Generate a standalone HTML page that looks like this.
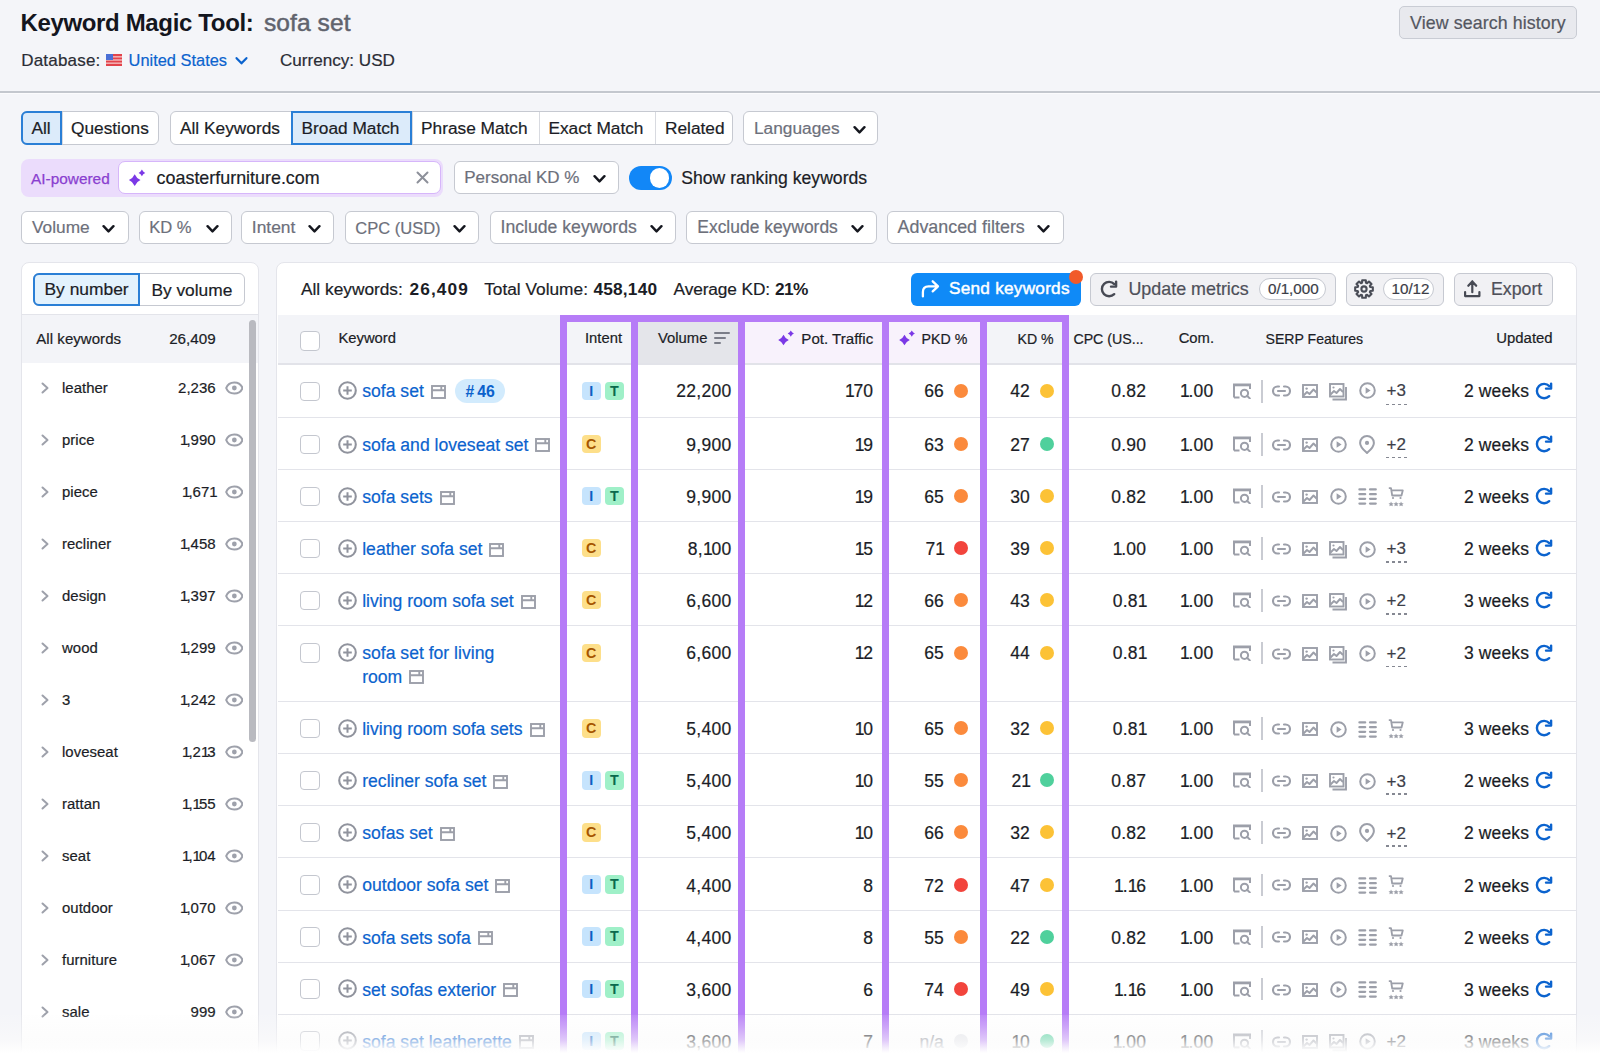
<!DOCTYPE html>
<html><head><meta charset="utf-8"><title>Keyword Magic Tool</title>
<style>
html,body{margin:0;padding:0;}
body{width:1600px;height:1059px;overflow:hidden;position:relative;background:#f4f5f9;font-family:"Liberation Sans",sans-serif;}
.t{position:absolute;white-space:nowrap;}
.r{position:absolute;display:block;}
</style></head><body>
<div class="t" style="top:11.47px;font-size:24px;line-height:24px;font-weight:700;color:#14161e;letter-spacing:-0.35px;left:20.5px;">Keyword Magic Tool:</div>
<div class="t" style="top:11.05px;font-size:24.5px;line-height:24.5px;font-weight:400;color:#60636d;letter-spacing:0.1px;left:264px;-webkit-text-stroke:0.5px #60636d;">sofa set</div>
<div class="t" style="top:52.30px;font-size:17px;line-height:17px;font-weight:400;color:#2a2c35;-webkit-text-stroke:0.2px currentColor;letter-spacing:0.2px;left:21.2px;">Database:</div>
<svg class="r" style="left:106px;top:54px;" width="16" height="12" viewBox="0 0 16 12"><rect width="16" height="12" fill="#e2434b"/><rect y="2" width="16" height="1.6" fill="#fff" opacity=".55"/><rect y="5.2" width="16" height="1.6" fill="#fff" opacity=".55"/><rect y="8.4" width="16" height="1.6" fill="#fff" opacity=".55"/><rect width="7" height="6" fill="#4a6fd6"/></svg>
<div class="t" style="top:52.01px;font-size:16.4px;line-height:16.4px;font-weight:400;color:#0b63ce;-webkit-text-stroke:0.2px currentColor;left:128.6px;">United States</div>
<svg class="r" style="left:235.3px;top:54.0px;" width="13" height="13" viewBox="0 0 13 13"><path d="M1.56 4.16 L6.50 9.36 L11.44 4.16" fill="none" stroke="#0b63ce" stroke-width="2.2" stroke-linecap="round" stroke-linejoin="round"/></svg>
<div class="t" style="top:52.22px;font-size:17.1px;line-height:17.1px;font-weight:400;color:#2a2c35;-webkit-text-stroke:0.2px currentColor;left:280px;">Currency: USD</div>
<div class="r" style="left:1399px;top:6px;width:177.5px;height:33px;background:#e8e9ee;border:1px solid #c9ccd4;border-radius:5px;box-sizing:border-box;"></div>
<div class="t" style="top:15.12px;font-size:17.8px;line-height:17.8px;font-weight:400;color:#545761;-webkit-text-stroke:0.2px currentColor;letter-spacing:0.1px;left:1410px;">View search history</div>
<div class="r" style="left:0px;top:91px;width:1600px;height:1.6px;background:#c3c7ce;"></div>
<div class="r" style="left:0px;top:92.6px;width:1600px;height:1px;background:#fbfbfd;"></div>
<div class="r" style="left:21px;top:111px;width:138px;height:34px;background:#fff;border:1px solid #c6c9d1;border-radius:6px;box-sizing:border-box;"></div>
<div class="r" style="left:62px;top:112px;width:1px;height:32px;background:#d8dae0;"></div>
<div class="r" style="left:21px;top:111px;width:41px;height:34px;background:#dcebfa;border:2px solid #2a7fd6;border-radius:6px 0 0 6px;box-sizing:border-box;"></div>
<div class="t" style="top:120.45px;font-size:17.3px;line-height:17.3px;font-weight:400;color:#1b1d26;-webkit-text-stroke:0.2px currentColor;left:31.5px;">All</div>
<div class="t" style="top:120.45px;font-size:17.3px;line-height:17.3px;font-weight:400;color:#1b1d26;-webkit-text-stroke:0.2px currentColor;left:71px;">Questions</div>
<div class="r" style="left:170px;top:111px;width:563.4px;height:34px;background:#fff;border:1px solid #c6c9d1;border-radius:6px;box-sizing:border-box;"></div>
<div class="r" style="left:290.5px;top:112px;width:1px;height:32px;background:#d8dae0;"></div>
<div class="r" style="left:411.5px;top:112px;width:1px;height:32px;background:#d8dae0;"></div>
<div class="r" style="left:538.5px;top:112px;width:1px;height:32px;background:#d8dae0;"></div>
<div class="r" style="left:654.7px;top:112px;width:1px;height:32px;background:#d8dae0;"></div>
<div class="r" style="left:290.5px;top:111px;width:121.0px;height:34px;background:#dcebfa;border:2px solid #2a7fd6;border-radius:0;box-sizing:border-box;"></div>
<div class="t" style="top:120.45px;font-size:17.3px;line-height:17.3px;font-weight:400;color:#1b1d26;-webkit-text-stroke:0.2px currentColor;left:180px;">All Keywords</div>
<div class="t" style="top:120.45px;font-size:17.3px;line-height:17.3px;font-weight:400;color:#1b1d26;-webkit-text-stroke:0.2px currentColor;left:301.5px;">Broad Match</div>
<div class="t" style="top:120.45px;font-size:17.3px;line-height:17.3px;font-weight:400;color:#1b1d26;-webkit-text-stroke:0.2px currentColor;left:421px;">Phrase Match</div>
<div class="t" style="top:120.45px;font-size:17.3px;line-height:17.3px;font-weight:400;color:#1b1d26;-webkit-text-stroke:0.2px currentColor;left:548.4px;">Exact Match</div>
<div class="t" style="top:120.45px;font-size:17.3px;line-height:17.3px;font-weight:400;color:#1b1d26;-webkit-text-stroke:0.2px currentColor;left:665px;">Related</div>
<div class="r" style="left:743px;top:111px;width:135px;height:34px;background:#fff;border:1px solid #c6c9d1;border-radius:6px;box-sizing:border-box;"></div>
<div class="t" style="top:119.65px;font-size:17.3px;line-height:17.3px;font-weight:400;color:#6d707b;-webkit-text-stroke:0.2px currentColor;left:754px;">Languages</div>
<svg class="r" style="left:852.8px;top:122.80000000000001px;" width="13" height="13" viewBox="0 0 13 13"><path d="M1.56 4.16 L6.50 9.36 L11.44 4.16" fill="none" stroke="#15171f" stroke-width="2.4" stroke-linecap="round" stroke-linejoin="round"/></svg>
<div class="r" style="left:21px;top:159px;width:422px;height:37.5px;background:#ebdcfc;border-radius:8px;"></div>
<div class="t" style="top:170.56px;font-size:15.4px;line-height:15.4px;font-weight:400;color:#8a3fd0;left:31px;-webkit-text-stroke:0.25px #8a3fd0;">AI-powered</div>
<div class="r" style="left:117.5px;top:161px;width:323.5px;height:33px;background:#fff;border:1.5px solid #d6b6fa;border-radius:7px;box-sizing:border-box;"></div>
<svg class="r" style="left:126px;top:168px;" width="22" height="20" viewBox="0 0 22 20"><path d="M8.7 6.3 Q10.44 10.36 14.5 12.1 Q10.44 13.84 8.7 17.9 Q6.959999999999999 13.84 2.8999999999999995 12.1 Q6.959999999999999 10.36 8.7 6.3Z" fill="#7b39e6"/><path d="M15.9 1.6000000000000005 Q16.89 3.9100000000000006 19.2 4.9 Q16.89 5.890000000000001 15.9 8.2 Q14.91 5.890000000000001 12.600000000000001 4.9 Q14.91 3.9100000000000006 15.9 1.6000000000000005Z" fill="#7b39e6"/></svg>
<div class="t" style="top:170.14px;font-size:17.9px;line-height:17.9px;font-weight:400;color:#1b1d26;-webkit-text-stroke:0.2px currentColor;left:156.6px;">coasterfurniture.com</div>
<svg class="r" style="left:416px;top:171px;" width="13" height="13" viewBox="0 0 13 13"><path d="M1.5 1.5 L11.5 11.5 M11.5 1.5 L1.5 11.5" stroke="#8d909a" stroke-width="2" stroke-linecap="round"/></svg>
<div class="r" style="left:453.5px;top:161px;width:165.5px;height:32.6px;background:#fff;border:1px solid #c6c9d1;border-radius:6px;box-sizing:border-box;"></div>
<div class="t" style="top:169.20px;font-size:17.0px;line-height:17.0px;font-weight:400;color:#6d707b;-webkit-text-stroke:0.2px currentColor;left:464.2px;">Personal KD %</div>
<svg class="r" style="left:592.8px;top:172.10000000000002px;" width="13" height="13" viewBox="0 0 13 13"><path d="M1.56 4.16 L6.50 9.36 L11.44 4.16" fill="none" stroke="#15171f" stroke-width="2.4" stroke-linecap="round" stroke-linejoin="round"/></svg>
<div class="r" style="left:629px;top:166px;width:42.5px;height:23.5px;background:#1287f7;border-radius:12px;"></div>
<div class="r" style="left:649.5px;top:168px;width:19.5px;height:19.5px;background:#fff;border-radius:50%;"></div>
<div class="t" style="top:169.59px;font-size:17.6px;line-height:17.6px;font-weight:400;color:#1b1d26;-webkit-text-stroke:0.2px currentColor;left:681.3px;">Show ranking keywords</div>
<div class="r" style="left:21px;top:211px;width:107.5px;height:32.6px;background:#fff;border:1px solid #c6c9d1;border-radius:6px;box-sizing:border-box;"></div>
<div class="t" style="top:218.95px;font-size:17.3px;line-height:17.3px;font-weight:400;color:#6d707b;-webkit-text-stroke:0.2px currentColor;left:32px;">Volume</div>
<svg class="r" style="left:102.3px;top:222.10000000000002px;" width="13" height="13" viewBox="0 0 13 13"><path d="M1.56 4.16 L6.50 9.36 L11.44 4.16" fill="none" stroke="#15171f" stroke-width="2.4" stroke-linecap="round" stroke-linejoin="round"/></svg>
<div class="r" style="left:138.5px;top:211px;width:93.1px;height:32.6px;background:#fff;border:1px solid #c6c9d1;border-radius:6px;box-sizing:border-box;"></div>
<div class="t" style="top:219.54px;font-size:16.6px;line-height:16.6px;font-weight:400;color:#6d707b;-webkit-text-stroke:0.2px currentColor;left:149.2px;">KD %</div>
<svg class="r" style="left:205.5px;top:222.10000000000002px;" width="13" height="13" viewBox="0 0 13 13"><path d="M1.56 4.16 L6.50 9.36 L11.44 4.16" fill="none" stroke="#15171f" stroke-width="2.4" stroke-linecap="round" stroke-linejoin="round"/></svg>
<div class="r" style="left:241.4px;top:211px;width:93.1px;height:32.6px;background:#fff;border:1px solid #c6c9d1;border-radius:6px;box-sizing:border-box;"></div>
<div class="t" style="top:218.86px;font-size:17.4px;line-height:17.4px;font-weight:400;color:#6d707b;-webkit-text-stroke:0.2px currentColor;left:251.8px;">Intent</div>
<svg class="r" style="left:308.3px;top:222.10000000000002px;" width="13" height="13" viewBox="0 0 13 13"><path d="M1.56 4.16 L6.50 9.36 L11.44 4.16" fill="none" stroke="#15171f" stroke-width="2.4" stroke-linecap="round" stroke-linejoin="round"/></svg>
<div class="r" style="left:344.6px;top:211px;width:134.79999999999995px;height:32.6px;background:#fff;border:1px solid #c6c9d1;border-radius:6px;box-sizing:border-box;"></div>
<div class="t" style="top:219.62px;font-size:16.5px;line-height:16.5px;font-weight:400;color:#6d707b;-webkit-text-stroke:0.2px currentColor;left:355.3px;">CPC (USD)</div>
<svg class="r" style="left:453.0px;top:222.10000000000002px;" width="13" height="13" viewBox="0 0 13 13"><path d="M1.56 4.16 L6.50 9.36 L11.44 4.16" fill="none" stroke="#15171f" stroke-width="2.4" stroke-linecap="round" stroke-linejoin="round"/></svg>
<div class="r" style="left:490px;top:211px;width:185.70000000000005px;height:32.6px;background:#fff;border:1px solid #c6c9d1;border-radius:6px;box-sizing:border-box;"></div>
<div class="t" style="top:218.65px;font-size:17.65px;line-height:17.65px;font-weight:400;color:#6d707b;-webkit-text-stroke:0.2px currentColor;left:500.5px;">Include keywords</div>
<svg class="r" style="left:649.8px;top:222.10000000000002px;" width="13" height="13" viewBox="0 0 13 13"><path d="M1.56 4.16 L6.50 9.36 L11.44 4.16" fill="none" stroke="#15171f" stroke-width="2.4" stroke-linecap="round" stroke-linejoin="round"/></svg>
<div class="r" style="left:686px;top:211px;width:190.70000000000005px;height:32.6px;background:#fff;border:1px solid #c6c9d1;border-radius:6px;box-sizing:border-box;"></div>
<div class="t" style="top:218.82px;font-size:17.45px;line-height:17.45px;font-weight:400;color:#6d707b;-webkit-text-stroke:0.2px currentColor;left:697.3px;">Exclude keywords</div>
<svg class="r" style="left:850.6px;top:222.10000000000002px;" width="13" height="13" viewBox="0 0 13 13"><path d="M1.56 4.16 L6.50 9.36 L11.44 4.16" fill="none" stroke="#15171f" stroke-width="2.4" stroke-linecap="round" stroke-linejoin="round"/></svg>
<div class="r" style="left:887px;top:211px;width:177px;height:32.6px;background:#fff;border:1px solid #c6c9d1;border-radius:6px;box-sizing:border-box;"></div>
<div class="t" style="top:219.14px;font-size:17.9px;line-height:17.9px;font-weight:400;color:#6d707b;-webkit-text-stroke:0.2px currentColor;left:897.5px;">Advanced filters</div>
<svg class="r" style="left:1037.3px;top:222.10000000000002px;" width="13" height="13" viewBox="0 0 13 13"><path d="M1.56 4.16 L6.50 9.36 L11.44 4.16" fill="none" stroke="#15171f" stroke-width="2.4" stroke-linecap="round" stroke-linejoin="round"/></svg>
<div class="r" style="left:21px;top:262.3px;width:237.8px;height:820px;background:#fff;border:1px solid #e4e5eb;border-radius:8px;box-sizing:border-box;"></div>
<div class="r" style="left:33.3px;top:272.5px;width:211.8px;height:33px;background:#fff;border:1px solid #c6c9d1;border-radius:6px;box-sizing:border-box;"></div>
<div class="r" style="left:33.3px;top:272.5px;width:106.5px;height:33px;background:#e3f2fd;border:2px solid #2a7fd6;border-radius:6px 0 0 6px;box-sizing:border-box;"></div>
<div class="t" style="top:281.46px;font-size:17.4px;line-height:17.4px;font-weight:400;color:#1b1d26;-webkit-text-stroke:0.2px currentColor;left:44.5px;">By number</div>
<div class="t" style="top:281.50px;font-size:17.35px;line-height:17.35px;font-weight:400;color:#1b1d26;-webkit-text-stroke:0.2px currentColor;left:151.4px;">By volume</div>
<div class="r" style="left:22px;top:314px;width:235.5px;height:1px;background:#e3e4ea;"></div>
<div class="r" style="left:22px;top:315px;width:235.5px;height:47.6px;background:#f3f4f8;"></div>
<div class="t" style="top:331.10px;font-size:15.0px;line-height:15.0px;font-weight:400;color:#1b1d26;-webkit-text-stroke:0.2px currentColor;letter-spacing:0.05px;left:36.3px;">All keywords</div>
<div class="t" style="top:330.93px;font-size:15.2px;line-height:15.2px;font-weight:400;color:#1b1d26;-webkit-text-stroke:0.2px currentColor;right:1384.4px;">26,409</div>
<svg class="r" style="left:40px;top:382px;" width="10" height="12" viewBox="0 0 10 12"><path d="M2.5 1.5 L7.5 6 L2.5 10.5" fill="none" stroke="#9ea1ab" stroke-width="2" stroke-linecap="round" stroke-linejoin="round"/></svg>
<div class="t" style="top:381.28px;font-size:14.9px;line-height:14.9px;font-weight:400;color:#1b1d26;-webkit-text-stroke:0.2px currentColor;letter-spacing:0.05px;left:62px;">leather</div>
<div class="t" style="top:380.00px;font-size:15.0px;line-height:15.0px;font-weight:400;color:#1b1d26;-webkit-text-stroke:0.2px currentColor;right:1384.4px;">2,236</div>
<svg class="r" style="left:224.8px;top:379.7px;" width="18.7" height="16" viewBox="0 0 18.7 16"><path d="M1.2 8 C4 0.6 14.7 0.6 17.5 8 C14.7 15.4 4 15.4 1.2 8Z" fill="none" stroke="#9ea1ab" stroke-width="2.1" stroke-linejoin="round"/><circle cx="9.35" cy="8" r="2.4" fill="#9ea1ab"/></svg>
<svg class="r" style="left:40px;top:434px;" width="10" height="12" viewBox="0 0 10 12"><path d="M2.5 1.5 L7.5 6 L2.5 10.5" fill="none" stroke="#9ea1ab" stroke-width="2" stroke-linecap="round" stroke-linejoin="round"/></svg>
<div class="t" style="top:433.28px;font-size:14.9px;line-height:14.9px;font-weight:400;color:#1b1d26;-webkit-text-stroke:0.2px currentColor;letter-spacing:0.05px;left:62px;">price</div>
<div class="t" style="top:432.00px;font-size:15.0px;line-height:15.0px;font-weight:400;color:#1b1d26;-webkit-text-stroke:0.2px currentColor;right:1384.4px;"><span style="letter-spacing:-2.0px">1</span>,990</div>
<svg class="r" style="left:224.8px;top:431.7px;" width="18.7" height="16" viewBox="0 0 18.7 16"><path d="M1.2 8 C4 0.6 14.7 0.6 17.5 8 C14.7 15.4 4 15.4 1.2 8Z" fill="none" stroke="#9ea1ab" stroke-width="2.1" stroke-linejoin="round"/><circle cx="9.35" cy="8" r="2.4" fill="#9ea1ab"/></svg>
<svg class="r" style="left:40px;top:486px;" width="10" height="12" viewBox="0 0 10 12"><path d="M2.5 1.5 L7.5 6 L2.5 10.5" fill="none" stroke="#9ea1ab" stroke-width="2" stroke-linecap="round" stroke-linejoin="round"/></svg>
<div class="t" style="top:485.28px;font-size:14.9px;line-height:14.9px;font-weight:400;color:#1b1d26;-webkit-text-stroke:0.2px currentColor;letter-spacing:0.05px;left:62px;">piece</div>
<div class="t" style="top:484.00px;font-size:15.0px;line-height:15.0px;font-weight:400;color:#1b1d26;-webkit-text-stroke:0.2px currentColor;right:1384.4px;"><span style="letter-spacing:-2.0px">1</span>,67<span style="letter-spacing:-2.0px">1</span></div>
<svg class="r" style="left:224.8px;top:483.7px;" width="18.7" height="16" viewBox="0 0 18.7 16"><path d="M1.2 8 C4 0.6 14.7 0.6 17.5 8 C14.7 15.4 4 15.4 1.2 8Z" fill="none" stroke="#9ea1ab" stroke-width="2.1" stroke-linejoin="round"/><circle cx="9.35" cy="8" r="2.4" fill="#9ea1ab"/></svg>
<svg class="r" style="left:40px;top:538px;" width="10" height="12" viewBox="0 0 10 12"><path d="M2.5 1.5 L7.5 6 L2.5 10.5" fill="none" stroke="#9ea1ab" stroke-width="2" stroke-linecap="round" stroke-linejoin="round"/></svg>
<div class="t" style="top:537.28px;font-size:14.9px;line-height:14.9px;font-weight:400;color:#1b1d26;-webkit-text-stroke:0.2px currentColor;letter-spacing:0.05px;left:62px;">recliner</div>
<div class="t" style="top:536.00px;font-size:15.0px;line-height:15.0px;font-weight:400;color:#1b1d26;-webkit-text-stroke:0.2px currentColor;right:1384.4px;"><span style="letter-spacing:-2.0px">1</span>,458</div>
<svg class="r" style="left:224.8px;top:535.7px;" width="18.7" height="16" viewBox="0 0 18.7 16"><path d="M1.2 8 C4 0.6 14.7 0.6 17.5 8 C14.7 15.4 4 15.4 1.2 8Z" fill="none" stroke="#9ea1ab" stroke-width="2.1" stroke-linejoin="round"/><circle cx="9.35" cy="8" r="2.4" fill="#9ea1ab"/></svg>
<svg class="r" style="left:40px;top:590px;" width="10" height="12" viewBox="0 0 10 12"><path d="M2.5 1.5 L7.5 6 L2.5 10.5" fill="none" stroke="#9ea1ab" stroke-width="2" stroke-linecap="round" stroke-linejoin="round"/></svg>
<div class="t" style="top:589.28px;font-size:14.9px;line-height:14.9px;font-weight:400;color:#1b1d26;-webkit-text-stroke:0.2px currentColor;letter-spacing:0.05px;left:62px;">design</div>
<div class="t" style="top:588.00px;font-size:15.0px;line-height:15.0px;font-weight:400;color:#1b1d26;-webkit-text-stroke:0.2px currentColor;right:1384.4px;"><span style="letter-spacing:-2.0px">1</span>,397</div>
<svg class="r" style="left:224.8px;top:587.7px;" width="18.7" height="16" viewBox="0 0 18.7 16"><path d="M1.2 8 C4 0.6 14.7 0.6 17.5 8 C14.7 15.4 4 15.4 1.2 8Z" fill="none" stroke="#9ea1ab" stroke-width="2.1" stroke-linejoin="round"/><circle cx="9.35" cy="8" r="2.4" fill="#9ea1ab"/></svg>
<svg class="r" style="left:40px;top:642px;" width="10" height="12" viewBox="0 0 10 12"><path d="M2.5 1.5 L7.5 6 L2.5 10.5" fill="none" stroke="#9ea1ab" stroke-width="2" stroke-linecap="round" stroke-linejoin="round"/></svg>
<div class="t" style="top:641.28px;font-size:14.9px;line-height:14.9px;font-weight:400;color:#1b1d26;-webkit-text-stroke:0.2px currentColor;letter-spacing:0.05px;left:62px;">wood</div>
<div class="t" style="top:640.00px;font-size:15.0px;line-height:15.0px;font-weight:400;color:#1b1d26;-webkit-text-stroke:0.2px currentColor;right:1384.4px;"><span style="letter-spacing:-2.0px">1</span>,299</div>
<svg class="r" style="left:224.8px;top:639.7px;" width="18.7" height="16" viewBox="0 0 18.7 16"><path d="M1.2 8 C4 0.6 14.7 0.6 17.5 8 C14.7 15.4 4 15.4 1.2 8Z" fill="none" stroke="#9ea1ab" stroke-width="2.1" stroke-linejoin="round"/><circle cx="9.35" cy="8" r="2.4" fill="#9ea1ab"/></svg>
<svg class="r" style="left:40px;top:694px;" width="10" height="12" viewBox="0 0 10 12"><path d="M2.5 1.5 L7.5 6 L2.5 10.5" fill="none" stroke="#9ea1ab" stroke-width="2" stroke-linecap="round" stroke-linejoin="round"/></svg>
<div class="t" style="top:693.28px;font-size:14.9px;line-height:14.9px;font-weight:400;color:#1b1d26;-webkit-text-stroke:0.2px currentColor;letter-spacing:0.05px;left:62px;">3</div>
<div class="t" style="top:692.00px;font-size:15.0px;line-height:15.0px;font-weight:400;color:#1b1d26;-webkit-text-stroke:0.2px currentColor;right:1384.4px;"><span style="letter-spacing:-2.0px">1</span>,242</div>
<svg class="r" style="left:224.8px;top:691.7px;" width="18.7" height="16" viewBox="0 0 18.7 16"><path d="M1.2 8 C4 0.6 14.7 0.6 17.5 8 C14.7 15.4 4 15.4 1.2 8Z" fill="none" stroke="#9ea1ab" stroke-width="2.1" stroke-linejoin="round"/><circle cx="9.35" cy="8" r="2.4" fill="#9ea1ab"/></svg>
<svg class="r" style="left:40px;top:746px;" width="10" height="12" viewBox="0 0 10 12"><path d="M2.5 1.5 L7.5 6 L2.5 10.5" fill="none" stroke="#9ea1ab" stroke-width="2" stroke-linecap="round" stroke-linejoin="round"/></svg>
<div class="t" style="top:745.28px;font-size:14.9px;line-height:14.9px;font-weight:400;color:#1b1d26;-webkit-text-stroke:0.2px currentColor;letter-spacing:0.05px;left:62px;">loveseat</div>
<div class="t" style="top:744.00px;font-size:15.0px;line-height:15.0px;font-weight:400;color:#1b1d26;-webkit-text-stroke:0.2px currentColor;right:1384.4px;"><span style="letter-spacing:-2.0px">1</span>,2<span style="letter-spacing:-2.0px">1</span>3</div>
<svg class="r" style="left:224.8px;top:743.7px;" width="18.7" height="16" viewBox="0 0 18.7 16"><path d="M1.2 8 C4 0.6 14.7 0.6 17.5 8 C14.7 15.4 4 15.4 1.2 8Z" fill="none" stroke="#9ea1ab" stroke-width="2.1" stroke-linejoin="round"/><circle cx="9.35" cy="8" r="2.4" fill="#9ea1ab"/></svg>
<svg class="r" style="left:40px;top:798px;" width="10" height="12" viewBox="0 0 10 12"><path d="M2.5 1.5 L7.5 6 L2.5 10.5" fill="none" stroke="#9ea1ab" stroke-width="2" stroke-linecap="round" stroke-linejoin="round"/></svg>
<div class="t" style="top:797.28px;font-size:14.9px;line-height:14.9px;font-weight:400;color:#1b1d26;-webkit-text-stroke:0.2px currentColor;letter-spacing:0.05px;left:62px;">rattan</div>
<div class="t" style="top:796.00px;font-size:15.0px;line-height:15.0px;font-weight:400;color:#1b1d26;-webkit-text-stroke:0.2px currentColor;right:1384.4px;"><span style="letter-spacing:-2.0px">1</span>,<span style="letter-spacing:-2.0px">1</span>55</div>
<svg class="r" style="left:224.8px;top:795.7px;" width="18.7" height="16" viewBox="0 0 18.7 16"><path d="M1.2 8 C4 0.6 14.7 0.6 17.5 8 C14.7 15.4 4 15.4 1.2 8Z" fill="none" stroke="#9ea1ab" stroke-width="2.1" stroke-linejoin="round"/><circle cx="9.35" cy="8" r="2.4" fill="#9ea1ab"/></svg>
<svg class="r" style="left:40px;top:850px;" width="10" height="12" viewBox="0 0 10 12"><path d="M2.5 1.5 L7.5 6 L2.5 10.5" fill="none" stroke="#9ea1ab" stroke-width="2" stroke-linecap="round" stroke-linejoin="round"/></svg>
<div class="t" style="top:849.28px;font-size:14.9px;line-height:14.9px;font-weight:400;color:#1b1d26;-webkit-text-stroke:0.2px currentColor;letter-spacing:0.05px;left:62px;">seat</div>
<div class="t" style="top:848.00px;font-size:15.0px;line-height:15.0px;font-weight:400;color:#1b1d26;-webkit-text-stroke:0.2px currentColor;right:1384.4px;"><span style="letter-spacing:-2.0px">1</span>,<span style="letter-spacing:-2.0px">1</span>04</div>
<svg class="r" style="left:224.8px;top:847.7px;" width="18.7" height="16" viewBox="0 0 18.7 16"><path d="M1.2 8 C4 0.6 14.7 0.6 17.5 8 C14.7 15.4 4 15.4 1.2 8Z" fill="none" stroke="#9ea1ab" stroke-width="2.1" stroke-linejoin="round"/><circle cx="9.35" cy="8" r="2.4" fill="#9ea1ab"/></svg>
<svg class="r" style="left:40px;top:902px;" width="10" height="12" viewBox="0 0 10 12"><path d="M2.5 1.5 L7.5 6 L2.5 10.5" fill="none" stroke="#9ea1ab" stroke-width="2" stroke-linecap="round" stroke-linejoin="round"/></svg>
<div class="t" style="top:901.28px;font-size:14.9px;line-height:14.9px;font-weight:400;color:#1b1d26;-webkit-text-stroke:0.2px currentColor;letter-spacing:0.05px;left:62px;">outdoor</div>
<div class="t" style="top:900.00px;font-size:15.0px;line-height:15.0px;font-weight:400;color:#1b1d26;-webkit-text-stroke:0.2px currentColor;right:1384.4px;"><span style="letter-spacing:-2.0px">1</span>,070</div>
<svg class="r" style="left:224.8px;top:899.7px;" width="18.7" height="16" viewBox="0 0 18.7 16"><path d="M1.2 8 C4 0.6 14.7 0.6 17.5 8 C14.7 15.4 4 15.4 1.2 8Z" fill="none" stroke="#9ea1ab" stroke-width="2.1" stroke-linejoin="round"/><circle cx="9.35" cy="8" r="2.4" fill="#9ea1ab"/></svg>
<svg class="r" style="left:40px;top:954px;" width="10" height="12" viewBox="0 0 10 12"><path d="M2.5 1.5 L7.5 6 L2.5 10.5" fill="none" stroke="#9ea1ab" stroke-width="2" stroke-linecap="round" stroke-linejoin="round"/></svg>
<div class="t" style="top:953.28px;font-size:14.9px;line-height:14.9px;font-weight:400;color:#1b1d26;-webkit-text-stroke:0.2px currentColor;letter-spacing:0.05px;left:62px;">furniture</div>
<div class="t" style="top:952.00px;font-size:15.0px;line-height:15.0px;font-weight:400;color:#1b1d26;-webkit-text-stroke:0.2px currentColor;right:1384.4px;"><span style="letter-spacing:-2.0px">1</span>,067</div>
<svg class="r" style="left:224.8px;top:951.7px;" width="18.7" height="16" viewBox="0 0 18.7 16"><path d="M1.2 8 C4 0.6 14.7 0.6 17.5 8 C14.7 15.4 4 15.4 1.2 8Z" fill="none" stroke="#9ea1ab" stroke-width="2.1" stroke-linejoin="round"/><circle cx="9.35" cy="8" r="2.4" fill="#9ea1ab"/></svg>
<svg class="r" style="left:40px;top:1006px;" width="10" height="12" viewBox="0 0 10 12"><path d="M2.5 1.5 L7.5 6 L2.5 10.5" fill="none" stroke="#9ea1ab" stroke-width="2" stroke-linecap="round" stroke-linejoin="round"/></svg>
<div class="t" style="top:1005.28px;font-size:14.9px;line-height:14.9px;font-weight:400;color:#1b1d26;-webkit-text-stroke:0.2px currentColor;letter-spacing:0.05px;left:62px;">sale</div>
<div class="t" style="top:1004.00px;font-size:15.0px;line-height:15.0px;font-weight:400;color:#1b1d26;-webkit-text-stroke:0.2px currentColor;right:1384.4px;">999</div>
<svg class="r" style="left:224.8px;top:1003.7px;" width="18.7" height="16" viewBox="0 0 18.7 16"><path d="M1.2 8 C4 0.6 14.7 0.6 17.5 8 C14.7 15.4 4 15.4 1.2 8Z" fill="none" stroke="#9ea1ab" stroke-width="2.1" stroke-linejoin="round"/><circle cx="9.35" cy="8" r="2.4" fill="#9ea1ab"/></svg>
<div class="r" style="left:249.3px;top:320px;width:6.7px;height:421.6px;background:#b9bac0;border-radius:4px;"></div>
<div class="r" style="left:275.8px;top:262.3px;width:1301.5px;height:820px;background:#fff;border:1px solid #e4e5eb;border-radius:8px;box-sizing:border-box;"></div>
<div class="t" style="top:281.05px;font-size:17.3px;line-height:17.3px;font-weight:400;color:#1b1d26;-webkit-text-stroke:0.2px currentColor;left:301px;">All keywords:</div>
<div class="t" style="top:281.25px;font-size:17.3px;line-height:17.3px;font-weight:700;color:#1b1d26;letter-spacing:1.1px;left:409.5px;">26,409</div>
<div class="t" style="top:281.05px;font-size:17.3px;line-height:17.3px;font-weight:400;color:#1b1d26;-webkit-text-stroke:0.2px currentColor;left:484.2px;">Total Volume:</div>
<div class="t" style="top:281.25px;font-size:17.3px;line-height:17.3px;font-weight:700;color:#1b1d26;letter-spacing:0.18px;left:593.5px;">458,140</div>
<div class="t" style="top:281.25px;font-size:17.3px;line-height:17.3px;font-weight:400;color:#1b1d26;-webkit-text-stroke:0.2px currentColor;letter-spacing:-0.12px;left:673.6px;">Average KD:</div>
<div class="t" style="top:281.25px;font-size:17.3px;line-height:17.3px;font-weight:700;color:#1b1d26;letter-spacing:-0.6px;left:775.0px;">21%</div>
<div class="r" style="left:911px;top:272.5px;width:169.5px;height:33px;background:#0f8af7;border-radius:6px;"></div>
<svg class="r" style="left:915px;top:276px;" width="26" height="24" viewBox="0 0 26 24"><path d="M7.9 20.4 V16 Q7.9 10.3 13.5 10.3 H23 M17.7 5.3 L23 10.3 L17.7 15.4" fill="none" stroke="#fff" stroke-width="2.3" stroke-linecap="round" stroke-linejoin="round"/></svg>
<div class="t" style="top:280.33px;font-size:17.2px;line-height:17.2px;font-weight:400;color:#fff;letter-spacing:0.25px;left:949.0px;-webkit-text-stroke:0.45px #fff;">Send keywords</div>
<div class="r" style="left:1069px;top:270px;width:14px;height:14px;background:#f15a2a;border-radius:50%;"></div>
<div class="r" style="left:1090px;top:272.5px;width:245.5999999999999px;height:33px;background:#f1f1f4;border:1px solid #c6c9d1;border-radius:6px;box-sizing:border-box;"></div>
<svg class="r" style="left:1099.5px;top:279.8px;" width="18" height="18" viewBox="0 0 18 18"><path d="M14.2 14.2 A7.2 7.2 0 1 1 14.3 4.1" fill="none" stroke="#474a54" stroke-width="2.4" stroke-linecap="round"/><path d="M16.1 1.6 V6.6 H11" fill="none" stroke="#474a54" stroke-width="2.4" stroke-linejoin="round" stroke-linecap="round"/></svg>
<div class="t" style="top:281.04px;font-size:17.9px;line-height:17.9px;font-weight:400;color:#4e5059;-webkit-text-stroke:0.2px currentColor;left:1128.4px;">Update metrics</div>
<div class="r" style="left:1259px;top:278.2px;width:67px;height:22.3px;background:#fff;border:1px solid #c6c9d1;border-radius:12px;box-sizing:border-box;"></div>
<div class="t" style="top:281.43px;font-size:15.2px;line-height:15.2px;font-weight:400;color:#3b3d47;-webkit-text-stroke:0.2px currentColor;left:1268px;">0/1,000</div>
<div class="r" style="left:1345.8px;top:272.5px;width:97.79999999999995px;height:33px;background:#f1f1f4;border:1px solid #c6c9d1;border-radius:6px;box-sizing:border-box;"></div>
<svg class="r" style="left:1349.4px;top:275.7px;" width="30" height="26" viewBox="0 0 30 26"><g fill="none" stroke="#4a4d57" stroke-width="2.1" stroke-linejoin="round"><path d="M13.05 6.69 L13.21 4.18 L16.79 4.18 L16.95 6.69 L18.08 7.16 L19.97 5.50 L22.50 8.03 L20.84 9.92 L21.31 11.05 L23.82 11.21 L23.82 14.79 L21.31 14.95 L20.84 16.08 L22.50 17.97 L19.97 20.50 L18.08 18.84 L16.95 19.31 L16.79 21.82 L13.21 21.82 L13.05 19.31 L11.92 18.84 L10.03 20.50 L7.50 17.97 L9.16 16.08 L8.69 14.95 L6.18 14.79 L6.18 11.21 L8.69 11.05 L9.16 9.92 L7.50 8.03 L10.03 5.50 L11.92 7.16Z"/><circle cx="15" cy="13" r="2.6"/></g></svg>
<div class="r" style="left:1383.4px;top:278.2px;width:50.59999999999991px;height:22.3px;background:#fff;border:1px solid #c6c9d1;border-radius:12px;box-sizing:border-box;"></div>
<div class="t" style="top:281.43px;font-size:15.2px;line-height:15.2px;font-weight:400;color:#3b3d47;-webkit-text-stroke:0.2px currentColor;left:1391.5px;">10/12</div>
<div class="r" style="left:1453.8px;top:272.5px;width:99.0px;height:33px;background:#f1f1f4;border:1px solid #c6c9d1;border-radius:6px;box-sizing:border-box;"></div>
<svg class="r" style="left:1458px;top:276px;" width="30" height="26" viewBox="0 0 30 26"><path d="M7.1 16 V20.1 H21.4 V16 M14.3 16.2 V5.4 M10.3 9.8 L14.3 5.4 L18.2 9.8" fill="none" stroke="#474a54" stroke-width="2.2" stroke-linecap="round" stroke-linejoin="round"/></svg>
<div class="t" style="top:281.17px;font-size:17.75px;line-height:17.75px;font-weight:400;color:#4e5059;-webkit-text-stroke:0.2px currentColor;left:1491px;">Export</div>
<div class="r" style="left:277.5px;top:315px;width:1298.5px;height:48.5px;background:#f3f4f8;"></div>
<div class="r" style="left:277.5px;top:363.4px;width:1298.5px;height:1.3px;background:#e2e3e9;"></div>
<div class="r" style="left:638px;top:315px;width:100px;height:48px;background:#e4e5ea;"></div>
<div class="r" style="left:745px;top:315px;width:137px;height:48px;background:#f8f2fc;"></div>
<div class="r" style="left:889px;top:315px;width:91px;height:48px;background:#f8f2fc;"></div>
<div class="r" style="left:300px;top:331px;width:19.5px;height:19.5px;background:#fff;border:1.3px solid #c4c7cf;border-radius:4px;box-sizing:border-box;"></div>
<div class="t" style="top:331.26px;font-size:14.8px;line-height:14.8px;font-weight:400;color:#1b1d26;-webkit-text-stroke:0.2px currentColor;left:338.4px;">Keyword</div>
<div class="t" style="top:331.26px;font-size:14.8px;line-height:14.8px;font-weight:400;color:#1b1d26;-webkit-text-stroke:0.2px currentColor;right:978px;">Intent</div>
<div class="t" style="top:331.26px;font-size:14.8px;line-height:14.8px;font-weight:400;color:#1b1d26;-webkit-text-stroke:0.2px currentColor;right:892.6px;">Volume</div>
<svg class="r" style="left:714px;top:331px;" width="16" height="14" viewBox="0 0 16 14"><path d="M1 2 H15 M1 7 H11 M1 12 H6" stroke="#7a7d88" stroke-width="2" stroke-linecap="round"/></svg>
<svg class="r" style="left:777px;top:329px;" width="19" height="18" viewBox="0 0 19 18"><path d="M6.5 5.7 Q8.09 9.41 11.8 11 Q8.09 12.59 6.5 16.3 Q4.91 12.59 1.2000000000000002 11 Q4.91 9.41 6.5 5.7Z" fill="#7b39e6"/><path d="M13.8 1.4999999999999996 Q14.73 3.67 16.900000000000002 4.6 Q14.73 5.529999999999999 13.8 7.699999999999999 Q12.870000000000001 5.529999999999999 10.700000000000001 4.6 Q12.870000000000001 3.67 13.8 1.4999999999999996Z" fill="#7b39e6"/></svg>
<div class="t" style="top:331.01px;font-size:15.1px;line-height:15.1px;font-weight:400;color:#1b1d26;-webkit-text-stroke:0.2px currentColor;right:726.8px;">Pot. Traffic</div>
<svg class="r" style="left:897.5px;top:329px;" width="19" height="18" viewBox="0 0 19 18"><path d="M6.5 5.7 Q8.09 9.41 11.8 11 Q8.09 12.59 6.5 16.3 Q4.91 12.59 1.2000000000000002 11 Q4.91 9.41 6.5 5.7Z" fill="#7b39e6"/><path d="M13.8 1.4999999999999996 Q14.73 3.67 16.900000000000002 4.6 Q14.73 5.529999999999999 13.8 7.699999999999999 Q12.870000000000001 5.529999999999999 10.700000000000001 4.6 Q12.870000000000001 3.67 13.8 1.4999999999999996Z" fill="#7b39e6"/></svg>
<div class="t" style="top:331.77px;font-size:14.2px;line-height:14.2px;font-weight:400;color:#1b1d26;-webkit-text-stroke:0.2px currentColor;left:921.6px;">PKD %</div>
<div class="t" style="top:331.86px;font-size:14.1px;line-height:14.1px;font-weight:400;color:#1b1d26;-webkit-text-stroke:0.2px currentColor;right:546.4000000000001px;">KD %</div>
<div class="t" style="top:331.77px;font-size:14.2px;line-height:14.2px;font-weight:400;color:#1b1d26;-webkit-text-stroke:0.2px currentColor;left:1073.4px;">CPC (US...</div>
<div class="t" style="top:331.26px;font-size:14.8px;line-height:14.8px;font-weight:400;color:#1b1d26;-webkit-text-stroke:0.2px currentColor;right:386px;">Com.</div>
<div class="t" style="top:331.86px;font-size:14.1px;line-height:14.1px;font-weight:400;color:#1b1d26;-webkit-text-stroke:0.2px currentColor;left:1265.5px;">SERP Features</div>
<div class="t" style="top:331.18px;font-size:14.9px;line-height:14.9px;font-weight:400;color:#1b1d26;-webkit-text-stroke:0.2px currentColor;right:47.40000000000009px;">Updated</div>
<div class="r" style="left:277.5px;top:417px;width:1298.5px;height:1px;background:#e3e4ea;"></div>
<div class="r" style="left:300px;top:381.55px;width:19.5px;height:19.5px;background:#fff;border:1.3px solid #c4c7cf;border-radius:4px;box-sizing:border-box;"></div>
<svg class="r" style="left:338.0px;top:380.75px;" width="19" height="19" viewBox="0 0 19 19"><circle cx="9.5" cy="9.5" r="8.3" fill="none" stroke="#90939d" stroke-width="2.1"/><path d="M9.5 5.2 V13.8 M5.2 9.5 H13.8" stroke="#90939d" stroke-width="2"/></svg>
<div class="t" style="top:383.14px;font-size:17.6px;line-height:17.6px;font-weight:400;color:#0b63ce;-webkit-text-stroke:0.2px currentColor;left:362.2px;">sofa set<svg style="display:inline-block;vertical-align:-1.5px;margin-left:7px" width="15" height="14" viewBox="0 0 15 14"><g fill="none" stroke="#9c9fa9" stroke-width="1.9"><rect x="1" y="1" width="13" height="12"/><path d="M1 5.2 H14 M10.3 1 V5.2"/></g></svg></div>
<div class="r" style="left:454.5px;top:379.3px;width:50.7px;height:23.5px;background:#d2ebfd;border-radius:12px;"></div>
<div class="t" style="top:384.07px;font-size:15.8px;line-height:15.8px;font-weight:700;color:#0b62cc;letter-spacing:0.2px;left:465.4px;">#&#8239;46</div>
<div class="r" style="left:582px;top:381.8px;width:18.5px;height:18.5px;background:#c6e4fd;border-radius:4px;"></div>
<div class="t" style="left:582px;width:18.5px;top:381.8px;height:18.5px;line-height:19.5px;text-align:center;font-size:14.3px;font-weight:700;color:#0d5fc4;">I</div>
<div class="r" style="left:605.2px;top:381.8px;width:18.5px;height:18.5px;background:#9ff0c8;border-radius:4px;"></div>
<div class="t" style="left:605.2px;width:18.5px;top:381.8px;height:18.5px;line-height:19.5px;text-align:center;font-size:14.3px;font-weight:700;color:#0a6a4c;">T</div>
<div class="t" style="top:383.23px;font-size:17.5px;line-height:17.5px;font-weight:400;color:#1b1d26;-webkit-text-stroke:0.2px currentColor;letter-spacing:0.3px;right:868.8px;margin-right:-0.3px;">22,200</div>
<div class="t" style="top:383.23px;font-size:17.5px;line-height:17.5px;font-weight:400;color:#1b1d26;-webkit-text-stroke:0.2px currentColor;right:727px;"><span style="letter-spacing:-1.2px">1</span>70</div>
<div class="t" style="top:383.23px;font-size:17.5px;line-height:17.5px;font-weight:400;color:#1b1d26;-webkit-text-stroke:0.2px currentColor;right:656.2px;">66</div>
<div class="r" style="left:954px;top:384.05px;width:14px;height:14px;background:#fb8a3c;border-radius:50%;"></div>
<div class="t" style="top:383.23px;font-size:17.5px;line-height:17.5px;font-weight:400;color:#1b1d26;-webkit-text-stroke:0.2px currentColor;right:570.3px;">42</div>
<div class="r" style="left:1040.3px;top:384.05px;width:14px;height:14px;background:#fcc236;border-radius:50%;"></div>
<div class="t" style="top:383.23px;font-size:17.5px;line-height:17.5px;font-weight:400;color:#1b1d26;-webkit-text-stroke:0.2px currentColor;letter-spacing:0.2px;right:454px;margin-right:-0.2px;">0.82</div>
<div class="t" style="top:383.23px;font-size:17.5px;line-height:17.5px;font-weight:400;color:#1b1d26;-webkit-text-stroke:0.2px currentColor;letter-spacing:0.2px;right:386.79999999999995px;margin-right:-0.2px;"><span style="letter-spacing:-1.2px">1</span>.00</div>
<svg class="r" style="left:1233px;top:383.05px;" width="18" height="16" viewBox="0 0 18 16"><g fill="none" stroke="#9c9fa9" stroke-width="2"><path d="M1 14.5 V2 H17 V6" /><path d="M1 14.5 H6.5"/><circle cx="11.5" cy="10.3" r="3.6"/><path d="M14 12.8 L16.8 15.4" stroke-linecap="round"/></g><rect x="0" y="0.5" width="18" height="2.8" fill="#9c9fa9"/></svg>
<div class="r" style="left:1261.3px;top:380.05px;width:1.3px;height:22.5px;background:#c9cbd2;"></div>
<svg class="r" style="left:1272.2px;top:384.65000000000003px;" width="19" height="12" viewBox="0 0 19 12"><g fill="none" stroke="#9c9fa9" stroke-width="2.1" stroke-linecap="round"><path d="M7 1.5 H5.5 A4.5 4.5 0 0 0 5.5 10.5 H7"/><path d="M12 1.5 H13.5 A4.5 4.5 0 0 1 13.5 10.5 H12"/><path d="M6 6 H13"/></g></svg>
<svg class="r" style="left:1302.2px;top:383.65000000000003px;" width="16" height="14" viewBox="0 0 16 14"><g fill="none" stroke="#9c9fa9" stroke-width="1.9"><rect x="1" y="1" width="14" height="12"/><path d="M1.5 11.5 L5 8 L7.5 10 L11.5 5.5 L14.5 8.5" stroke-linejoin="round"/></g><circle cx="4.6" cy="4.6" r="1.2" fill="#9c9fa9"/></svg>
<svg class="r" style="left:1329.3999999999999px;top:382.65000000000003px;" width="19" height="19" viewBox="0 0 19 19"><g fill="none" stroke="#9c9fa9" stroke-width="1.9"><rect x="1" y="1" width="13.5" height="12.5"/><path d="M1.5 11.5 L5 8 L7.5 10 L11 6 L14 9" stroke-linejoin="round"/><path d="M3.5 16.5 H17 V4"/></g><circle cx="4.5" cy="4.5" r="1.1" fill="#9c9fa9"/></svg>
<svg class="r" style="left:1358.5px;top:382.15000000000003px;" width="17" height="17" viewBox="0 0 17 17"><circle cx="8.5" cy="8.5" r="7.3" fill="none" stroke="#9c9fa9" stroke-width="2"/><path d="M6.6 5.2 L11.6 8.5 L6.6 11.8Z" fill="#9c9fa9"/></svg>
<div class="t" style="top:382.25px;font-size:17.0px;line-height:17.0px;font-weight:400;color:#3d4049;-webkit-text-stroke:0.2px currentColor;left:1386.6px;">+3</div>
<div class="r" style="left:1386.1px;top:403.85px;width:21px;height:1.5px;background:repeating-linear-gradient(90deg,#858892 0 2.6px,transparent 2.6px 6px);"></div>
<div class="t" style="top:383.23px;font-size:17.5px;line-height:17.5px;font-weight:400;color:#1b1d26;-webkit-text-stroke:0.2px currentColor;letter-spacing:0.15px;right:71px;margin-right:-0.15px;">2 weeks</div>
<svg class="r" style="left:1534.5px;top:382.05px;" width="18" height="18" viewBox="0 0 18 18"><path d="M14.2 14.2 A7.2 7.2 0 1 1 14.3 4.1" fill="none" stroke="#0b63ce" stroke-width="2.4" stroke-linecap="round"/><path d="M16.1 1.6 V6.6 H11" fill="none" stroke="#0b63ce" stroke-width="2.4" stroke-linejoin="round" stroke-linecap="round"/></svg>
<div class="r" style="left:277.5px;top:469px;width:1298.5px;height:1px;background:#e3e4ea;"></div>
<div class="r" style="left:300px;top:434.55px;width:19.5px;height:19.5px;background:#fff;border:1.3px solid #c4c7cf;border-radius:4px;box-sizing:border-box;"></div>
<svg class="r" style="left:338.0px;top:434.55px;" width="19" height="19" viewBox="0 0 19 19"><circle cx="9.5" cy="9.5" r="8.3" fill="none" stroke="#90939d" stroke-width="2.1"/><path d="M9.5 5.2 V13.8 M5.2 9.5 H13.8" stroke="#90939d" stroke-width="2"/></svg>
<div class="t" style="top:436.94px;font-size:17.6px;line-height:17.6px;font-weight:400;color:#0b63ce;-webkit-text-stroke:0.2px currentColor;left:362.2px;">sofa and loveseat set<svg style="display:inline-block;vertical-align:-1.5px;margin-left:7px" width="15" height="14" viewBox="0 0 15 14"><g fill="none" stroke="#9c9fa9" stroke-width="1.9"><rect x="1" y="1" width="13" height="12"/><path d="M1 5.2 H14 M10.3 1 V5.2"/></g></svg></div>
<div class="r" style="left:582px;top:434.8px;width:18.5px;height:18.5px;background:#fddf8a;border-radius:4px;"></div>
<div class="t" style="left:582px;width:18.5px;top:434.8px;height:18.5px;line-height:19.5px;text-align:center;font-size:14.3px;font-weight:700;color:#a65500;">C</div>
<div class="t" style="top:437.03px;font-size:17.5px;line-height:17.5px;font-weight:400;color:#1b1d26;-webkit-text-stroke:0.2px currentColor;letter-spacing:0.3px;right:868.8px;margin-right:-0.3px;">9,900</div>
<div class="t" style="top:437.03px;font-size:17.5px;line-height:17.5px;font-weight:400;color:#1b1d26;-webkit-text-stroke:0.2px currentColor;right:727px;"><span style="letter-spacing:-1.2px">1</span>9</div>
<div class="t" style="top:437.03px;font-size:17.5px;line-height:17.5px;font-weight:400;color:#1b1d26;-webkit-text-stroke:0.2px currentColor;right:656.2px;">63</div>
<div class="r" style="left:954px;top:437.05px;width:14px;height:14px;background:#fb8a3c;border-radius:50%;"></div>
<div class="t" style="top:437.03px;font-size:17.5px;line-height:17.5px;font-weight:400;color:#1b1d26;-webkit-text-stroke:0.2px currentColor;right:570.3px;">27</div>
<div class="r" style="left:1040.3px;top:437.05px;width:14px;height:14px;background:#4fd09c;border-radius:50%;"></div>
<div class="t" style="top:437.03px;font-size:17.5px;line-height:17.5px;font-weight:400;color:#1b1d26;-webkit-text-stroke:0.2px currentColor;letter-spacing:0.2px;right:454px;margin-right:-0.2px;">0.90</div>
<div class="t" style="top:437.03px;font-size:17.5px;line-height:17.5px;font-weight:400;color:#1b1d26;-webkit-text-stroke:0.2px currentColor;letter-spacing:0.2px;right:386.79999999999995px;margin-right:-0.2px;"><span style="letter-spacing:-1.2px">1</span>.00</div>
<svg class="r" style="left:1233px;top:436.05px;" width="18" height="16" viewBox="0 0 18 16"><g fill="none" stroke="#9c9fa9" stroke-width="2"><path d="M1 14.5 V2 H17 V6" /><path d="M1 14.5 H6.5"/><circle cx="11.5" cy="10.3" r="3.6"/><path d="M14 12.8 L16.8 15.4" stroke-linecap="round"/></g><rect x="0" y="0.5" width="18" height="2.8" fill="#9c9fa9"/></svg>
<div class="r" style="left:1261.3px;top:433.05px;width:1.3px;height:22.5px;background:#c9cbd2;"></div>
<svg class="r" style="left:1272.2px;top:438.85px;" width="19" height="12" viewBox="0 0 19 12"><g fill="none" stroke="#9c9fa9" stroke-width="2.1" stroke-linecap="round"><path d="M7 1.5 H5.5 A4.5 4.5 0 0 0 5.5 10.5 H7"/><path d="M12 1.5 H13.5 A4.5 4.5 0 0 1 13.5 10.5 H12"/><path d="M6 6 H13"/></g></svg>
<svg class="r" style="left:1302.2px;top:437.85px;" width="16" height="14" viewBox="0 0 16 14"><g fill="none" stroke="#9c9fa9" stroke-width="1.9"><rect x="1" y="1" width="14" height="12"/><path d="M1.5 11.5 L5 8 L7.5 10 L11.5 5.5 L14.5 8.5" stroke-linejoin="round"/></g><circle cx="4.6" cy="4.6" r="1.2" fill="#9c9fa9"/></svg>
<svg class="r" style="left:1330.1px;top:436.35px;" width="17" height="17" viewBox="0 0 17 17"><circle cx="8.5" cy="8.5" r="7.3" fill="none" stroke="#9c9fa9" stroke-width="2"/><path d="M6.6 5.2 L11.6 8.5 L6.6 11.8Z" fill="#9c9fa9"/></svg>
<svg class="r" style="left:1359px;top:435.05px;" width="16" height="19.5" viewBox="0 0 16 19.5"><path d="M8 18 C5.6 15.8 1.1 12.2 1.1 7.9 A6.9 6.9 0 0 1 14.9 7.9 C14.9 12.2 10.4 15.8 8 18Z" fill="none" stroke="#9c9fa9" stroke-width="2" stroke-linejoin="round"/><circle cx="8" cy="7.9" r="2.1" fill="#9c9fa9"/></svg>
<div class="t" style="top:436.25px;font-size:17.0px;line-height:17.0px;font-weight:400;color:#3d4049;-webkit-text-stroke:0.2px currentColor;left:1386.6px;">+2</div>
<div class="r" style="left:1386.1px;top:456.85px;width:21px;height:1.5px;background:repeating-linear-gradient(90deg,#858892 0 2.6px,transparent 2.6px 6px);"></div>
<div class="t" style="top:437.03px;font-size:17.5px;line-height:17.5px;font-weight:400;color:#1b1d26;-webkit-text-stroke:0.2px currentColor;letter-spacing:0.15px;right:71px;margin-right:-0.15px;">2 weeks</div>
<svg class="r" style="left:1534.5px;top:435.05px;" width="18" height="18" viewBox="0 0 18 18"><path d="M14.2 14.2 A7.2 7.2 0 1 1 14.3 4.1" fill="none" stroke="#0b63ce" stroke-width="2.4" stroke-linecap="round"/><path d="M16.1 1.6 V6.6 H11" fill="none" stroke="#0b63ce" stroke-width="2.4" stroke-linejoin="round" stroke-linecap="round"/></svg>
<div class="r" style="left:277.5px;top:521px;width:1298.5px;height:1px;background:#e3e4ea;"></div>
<div class="r" style="left:300px;top:486.65000000000003px;width:19.5px;height:19.5px;background:#fff;border:1.3px solid #c4c7cf;border-radius:4px;box-sizing:border-box;"></div>
<svg class="r" style="left:338.0px;top:486.65000000000003px;" width="19" height="19" viewBox="0 0 19 19"><circle cx="9.5" cy="9.5" r="8.3" fill="none" stroke="#90939d" stroke-width="2.1"/><path d="M9.5 5.2 V13.8 M5.2 9.5 H13.8" stroke="#90939d" stroke-width="2"/></svg>
<div class="t" style="top:489.04px;font-size:17.6px;line-height:17.6px;font-weight:400;color:#0b63ce;-webkit-text-stroke:0.2px currentColor;left:362.2px;">sofa sets<svg style="display:inline-block;vertical-align:-1.5px;margin-left:7px" width="15" height="14" viewBox="0 0 15 14"><g fill="none" stroke="#9c9fa9" stroke-width="1.9"><rect x="1" y="1" width="13" height="12"/><path d="M1 5.2 H14 M10.3 1 V5.2"/></g></svg></div>
<div class="r" style="left:582px;top:486.90000000000003px;width:18.5px;height:18.5px;background:#c6e4fd;border-radius:4px;"></div>
<div class="t" style="left:582px;width:18.5px;top:486.90000000000003px;height:18.5px;line-height:19.5px;text-align:center;font-size:14.3px;font-weight:700;color:#0d5fc4;">I</div>
<div class="r" style="left:605.2px;top:486.90000000000003px;width:18.5px;height:18.5px;background:#9ff0c8;border-radius:4px;"></div>
<div class="t" style="left:605.2px;width:18.5px;top:486.90000000000003px;height:18.5px;line-height:19.5px;text-align:center;font-size:14.3px;font-weight:700;color:#0a6a4c;">T</div>
<div class="t" style="top:489.13px;font-size:17.5px;line-height:17.5px;font-weight:400;color:#1b1d26;-webkit-text-stroke:0.2px currentColor;letter-spacing:0.3px;right:868.8px;margin-right:-0.3px;">9,900</div>
<div class="t" style="top:489.13px;font-size:17.5px;line-height:17.5px;font-weight:400;color:#1b1d26;-webkit-text-stroke:0.2px currentColor;right:727px;"><span style="letter-spacing:-1.2px">1</span>9</div>
<div class="t" style="top:489.13px;font-size:17.5px;line-height:17.5px;font-weight:400;color:#1b1d26;-webkit-text-stroke:0.2px currentColor;right:656.2px;">65</div>
<div class="r" style="left:954px;top:489.15000000000003px;width:14px;height:14px;background:#fb8a3c;border-radius:50%;"></div>
<div class="t" style="top:489.13px;font-size:17.5px;line-height:17.5px;font-weight:400;color:#1b1d26;-webkit-text-stroke:0.2px currentColor;right:570.3px;">30</div>
<div class="r" style="left:1040.3px;top:489.15000000000003px;width:14px;height:14px;background:#fcc236;border-radius:50%;"></div>
<div class="t" style="top:489.13px;font-size:17.5px;line-height:17.5px;font-weight:400;color:#1b1d26;-webkit-text-stroke:0.2px currentColor;letter-spacing:0.2px;right:454px;margin-right:-0.2px;">0.82</div>
<div class="t" style="top:489.13px;font-size:17.5px;line-height:17.5px;font-weight:400;color:#1b1d26;-webkit-text-stroke:0.2px currentColor;letter-spacing:0.2px;right:386.79999999999995px;margin-right:-0.2px;"><span style="letter-spacing:-1.2px">1</span>.00</div>
<svg class="r" style="left:1233px;top:488.15000000000003px;" width="18" height="16" viewBox="0 0 18 16"><g fill="none" stroke="#9c9fa9" stroke-width="2"><path d="M1 14.5 V2 H17 V6" /><path d="M1 14.5 H6.5"/><circle cx="11.5" cy="10.3" r="3.6"/><path d="M14 12.8 L16.8 15.4" stroke-linecap="round"/></g><rect x="0" y="0.5" width="18" height="2.8" fill="#9c9fa9"/></svg>
<div class="r" style="left:1261.3px;top:485.15000000000003px;width:1.3px;height:22.5px;background:#c9cbd2;"></div>
<svg class="r" style="left:1272.2px;top:490.95000000000005px;" width="19" height="12" viewBox="0 0 19 12"><g fill="none" stroke="#9c9fa9" stroke-width="2.1" stroke-linecap="round"><path d="M7 1.5 H5.5 A4.5 4.5 0 0 0 5.5 10.5 H7"/><path d="M12 1.5 H13.5 A4.5 4.5 0 0 1 13.5 10.5 H12"/><path d="M6 6 H13"/></g></svg>
<svg class="r" style="left:1302.2px;top:489.95000000000005px;" width="16" height="14" viewBox="0 0 16 14"><g fill="none" stroke="#9c9fa9" stroke-width="1.9"><rect x="1" y="1" width="14" height="12"/><path d="M1.5 11.5 L5 8 L7.5 10 L11.5 5.5 L14.5 8.5" stroke-linejoin="round"/></g><circle cx="4.6" cy="4.6" r="1.2" fill="#9c9fa9"/></svg>
<svg class="r" style="left:1330.1px;top:488.45000000000005px;" width="17" height="17" viewBox="0 0 17 17"><circle cx="8.5" cy="8.5" r="7.3" fill="none" stroke="#9c9fa9" stroke-width="2"/><path d="M6.6 5.2 L11.6 8.5 L6.6 11.8Z" fill="#9c9fa9"/></svg>
<svg class="r" style="left:1357.5px;top:488.45000000000005px;" width="19.5" height="17" viewBox="0 0 19.5 17"><rect x="0.3" y="0.3" width="8" height="2.3" rx="1.15" fill="#9c9fa9"/><rect x="0.3" y="5.0" width="8" height="2.3" rx="1.15" fill="#9c9fa9"/><rect x="0.3" y="9.7" width="8" height="2.3" rx="1.15" fill="#9c9fa9"/><rect x="0.3" y="14.4" width="8" height="2.3" rx="1.15" fill="#9c9fa9"/><rect x="10.9" y="0.3" width="8" height="2.3" rx="1.15" fill="#9c9fa9"/><rect x="10.9" y="5.0" width="8" height="2.3" rx="1.15" fill="#9c9fa9"/><rect x="10.9" y="9.7" width="8" height="2.3" rx="1.15" fill="#9c9fa9"/><rect x="10.9" y="14.4" width="8" height="2.3" rx="1.15" fill="#9c9fa9"/></svg>
<svg class="r" style="left:1387.5px;top:486.95000000000005px;" width="16" height="20" viewBox="0 0 16 20"><g fill="none" stroke="#9c9fa9" stroke-width="1.8" stroke-linejoin="round"><path d="M0.8 1.2 H3 L4.2 8.5 H13.5 L14.8 3.3 H3.6"/></g><circle cx="5" cy="11" r="1.1" fill="#9c9fa9"/><circle cx="12.5" cy="11" r="1.1" fill="#9c9fa9"/><path d="M3 14.6 l0.9 1.6 1.8 0.1 -1.3 1.2 0.4 1.8 -1.8 -0.9 -1.6 0.9 0.4 -1.8 -1.3 -1.2 1.8 -0.1Z" fill="#9c9fa9"/><path d="M8 14.6 l0.9 1.6 1.8 0.1 -1.3 1.2 0.4 1.8 -1.8 -0.9 -1.6 0.9 0.4 -1.8 -1.3 -1.2 1.8 -0.1Z" fill="#9c9fa9"/><path d="M13 14.6 l0.9 1.6 1.8 0.1 -1.3 1.2 0.4 1.8 -1.8 -0.9 -1.6 0.9 0.4 -1.8 -1.3 -1.2 1.8 -0.1Z" fill="#9c9fa9"/></svg>
<div class="t" style="top:489.13px;font-size:17.5px;line-height:17.5px;font-weight:400;color:#1b1d26;-webkit-text-stroke:0.2px currentColor;letter-spacing:0.15px;right:71px;margin-right:-0.15px;">2 weeks</div>
<svg class="r" style="left:1534.5px;top:487.15000000000003px;" width="18" height="18" viewBox="0 0 18 18"><path d="M14.2 14.2 A7.2 7.2 0 1 1 14.3 4.1" fill="none" stroke="#0b63ce" stroke-width="2.4" stroke-linecap="round"/><path d="M16.1 1.6 V6.6 H11" fill="none" stroke="#0b63ce" stroke-width="2.4" stroke-linejoin="round" stroke-linecap="round"/></svg>
<div class="r" style="left:277.5px;top:573px;width:1298.5px;height:1px;background:#e3e4ea;"></div>
<div class="r" style="left:300px;top:538.7px;width:19.5px;height:19.5px;background:#fff;border:1.3px solid #c4c7cf;border-radius:4px;box-sizing:border-box;"></div>
<svg class="r" style="left:338.0px;top:538.7px;" width="19" height="19" viewBox="0 0 19 19"><circle cx="9.5" cy="9.5" r="8.3" fill="none" stroke="#90939d" stroke-width="2.1"/><path d="M9.5 5.2 V13.8 M5.2 9.5 H13.8" stroke="#90939d" stroke-width="2"/></svg>
<div class="t" style="top:541.09px;font-size:17.6px;line-height:17.6px;font-weight:400;color:#0b63ce;-webkit-text-stroke:0.2px currentColor;left:362.2px;">leather sofa set<svg style="display:inline-block;vertical-align:-1.5px;margin-left:7px" width="15" height="14" viewBox="0 0 15 14"><g fill="none" stroke="#9c9fa9" stroke-width="1.9"><rect x="1" y="1" width="13" height="12"/><path d="M1 5.2 H14 M10.3 1 V5.2"/></g></svg></div>
<div class="r" style="left:582px;top:538.95px;width:18.5px;height:18.5px;background:#fddf8a;border-radius:4px;"></div>
<div class="t" style="left:582px;width:18.5px;top:538.95px;height:18.5px;line-height:19.5px;text-align:center;font-size:14.3px;font-weight:700;color:#a65500;">C</div>
<div class="t" style="top:541.18px;font-size:17.5px;line-height:17.5px;font-weight:400;color:#1b1d26;-webkit-text-stroke:0.2px currentColor;letter-spacing:0.3px;right:868.8px;margin-right:-0.3px;">8,<span style="letter-spacing:-1.2px">1</span>00</div>
<div class="t" style="top:541.18px;font-size:17.5px;line-height:17.5px;font-weight:400;color:#1b1d26;-webkit-text-stroke:0.2px currentColor;right:727px;"><span style="letter-spacing:-1.2px">1</span>5</div>
<div class="t" style="top:541.18px;font-size:17.5px;line-height:17.5px;font-weight:400;color:#1b1d26;-webkit-text-stroke:0.2px currentColor;right:656.2px;">7<span style="letter-spacing:-1.2px">1</span></div>
<div class="r" style="left:954px;top:541.2px;width:14px;height:14px;background:#f2443c;border-radius:50%;"></div>
<div class="t" style="top:541.18px;font-size:17.5px;line-height:17.5px;font-weight:400;color:#1b1d26;-webkit-text-stroke:0.2px currentColor;right:570.3px;">39</div>
<div class="r" style="left:1040.3px;top:541.2px;width:14px;height:14px;background:#fcc236;border-radius:50%;"></div>
<div class="t" style="top:541.18px;font-size:17.5px;line-height:17.5px;font-weight:400;color:#1b1d26;-webkit-text-stroke:0.2px currentColor;letter-spacing:0.2px;right:454px;margin-right:-0.2px;"><span style="letter-spacing:-1.2px">1</span>.00</div>
<div class="t" style="top:541.18px;font-size:17.5px;line-height:17.5px;font-weight:400;color:#1b1d26;-webkit-text-stroke:0.2px currentColor;letter-spacing:0.2px;right:386.79999999999995px;margin-right:-0.2px;"><span style="letter-spacing:-1.2px">1</span>.00</div>
<svg class="r" style="left:1233px;top:540.2px;" width="18" height="16" viewBox="0 0 18 16"><g fill="none" stroke="#9c9fa9" stroke-width="2"><path d="M1 14.5 V2 H17 V6" /><path d="M1 14.5 H6.5"/><circle cx="11.5" cy="10.3" r="3.6"/><path d="M14 12.8 L16.8 15.4" stroke-linecap="round"/></g><rect x="0" y="0.5" width="18" height="2.8" fill="#9c9fa9"/></svg>
<div class="r" style="left:1261.3px;top:537.2px;width:1.3px;height:22.5px;background:#c9cbd2;"></div>
<svg class="r" style="left:1272.2px;top:543.0px;" width="19" height="12" viewBox="0 0 19 12"><g fill="none" stroke="#9c9fa9" stroke-width="2.1" stroke-linecap="round"><path d="M7 1.5 H5.5 A4.5 4.5 0 0 0 5.5 10.5 H7"/><path d="M12 1.5 H13.5 A4.5 4.5 0 0 1 13.5 10.5 H12"/><path d="M6 6 H13"/></g></svg>
<svg class="r" style="left:1302.2px;top:542.0px;" width="16" height="14" viewBox="0 0 16 14"><g fill="none" stroke="#9c9fa9" stroke-width="1.9"><rect x="1" y="1" width="14" height="12"/><path d="M1.5 11.5 L5 8 L7.5 10 L11.5 5.5 L14.5 8.5" stroke-linejoin="round"/></g><circle cx="4.6" cy="4.6" r="1.2" fill="#9c9fa9"/></svg>
<svg class="r" style="left:1329.3999999999999px;top:541.0px;" width="19" height="19" viewBox="0 0 19 19"><g fill="none" stroke="#9c9fa9" stroke-width="1.9"><rect x="1" y="1" width="13.5" height="12.5"/><path d="M1.5 11.5 L5 8 L7.5 10 L11 6 L14 9" stroke-linejoin="round"/><path d="M3.5 16.5 H17 V4"/></g><circle cx="4.5" cy="4.5" r="1.1" fill="#9c9fa9"/></svg>
<svg class="r" style="left:1358.5px;top:540.5px;" width="17" height="17" viewBox="0 0 17 17"><circle cx="8.5" cy="8.5" r="7.3" fill="none" stroke="#9c9fa9" stroke-width="2"/><path d="M6.6 5.2 L11.6 8.5 L6.6 11.8Z" fill="#9c9fa9"/></svg>
<div class="t" style="top:540.40px;font-size:17.0px;line-height:17.0px;font-weight:400;color:#3d4049;-webkit-text-stroke:0.2px currentColor;left:1386.6px;">+3</div>
<div class="r" style="left:1386.1px;top:561.0px;width:21px;height:1.5px;background:repeating-linear-gradient(90deg,#858892 0 2.6px,transparent 2.6px 6px);"></div>
<div class="t" style="top:541.18px;font-size:17.5px;line-height:17.5px;font-weight:400;color:#1b1d26;-webkit-text-stroke:0.2px currentColor;letter-spacing:0.15px;right:71px;margin-right:-0.15px;">2 weeks</div>
<svg class="r" style="left:1534.5px;top:539.2px;" width="18" height="18" viewBox="0 0 18 18"><path d="M14.2 14.2 A7.2 7.2 0 1 1 14.3 4.1" fill="none" stroke="#0b63ce" stroke-width="2.4" stroke-linecap="round"/><path d="M16.1 1.6 V6.6 H11" fill="none" stroke="#0b63ce" stroke-width="2.4" stroke-linejoin="round" stroke-linecap="round"/></svg>
<div class="r" style="left:277.5px;top:625px;width:1298.5px;height:1px;background:#e3e4ea;"></div>
<div class="r" style="left:300px;top:590.7px;width:19.5px;height:19.5px;background:#fff;border:1.3px solid #c4c7cf;border-radius:4px;box-sizing:border-box;"></div>
<svg class="r" style="left:338.0px;top:590.7px;" width="19" height="19" viewBox="0 0 19 19"><circle cx="9.5" cy="9.5" r="8.3" fill="none" stroke="#90939d" stroke-width="2.1"/><path d="M9.5 5.2 V13.8 M5.2 9.5 H13.8" stroke="#90939d" stroke-width="2"/></svg>
<div class="t" style="top:593.09px;font-size:17.6px;line-height:17.6px;font-weight:400;color:#0b63ce;-webkit-text-stroke:0.2px currentColor;left:362.2px;">living room sofa set<svg style="display:inline-block;vertical-align:-1.5px;margin-left:7px" width="15" height="14" viewBox="0 0 15 14"><g fill="none" stroke="#9c9fa9" stroke-width="1.9"><rect x="1" y="1" width="13" height="12"/><path d="M1 5.2 H14 M10.3 1 V5.2"/></g></svg></div>
<div class="r" style="left:582px;top:590.95px;width:18.5px;height:18.5px;background:#fddf8a;border-radius:4px;"></div>
<div class="t" style="left:582px;width:18.5px;top:590.95px;height:18.5px;line-height:19.5px;text-align:center;font-size:14.3px;font-weight:700;color:#a65500;">C</div>
<div class="t" style="top:593.18px;font-size:17.5px;line-height:17.5px;font-weight:400;color:#1b1d26;-webkit-text-stroke:0.2px currentColor;letter-spacing:0.3px;right:868.8px;margin-right:-0.3px;">6,600</div>
<div class="t" style="top:593.18px;font-size:17.5px;line-height:17.5px;font-weight:400;color:#1b1d26;-webkit-text-stroke:0.2px currentColor;right:727px;"><span style="letter-spacing:-1.2px">1</span>2</div>
<div class="t" style="top:593.18px;font-size:17.5px;line-height:17.5px;font-weight:400;color:#1b1d26;-webkit-text-stroke:0.2px currentColor;right:656.2px;">66</div>
<div class="r" style="left:954px;top:593.2px;width:14px;height:14px;background:#fb8a3c;border-radius:50%;"></div>
<div class="t" style="top:593.18px;font-size:17.5px;line-height:17.5px;font-weight:400;color:#1b1d26;-webkit-text-stroke:0.2px currentColor;right:570.3px;">43</div>
<div class="r" style="left:1040.3px;top:593.2px;width:14px;height:14px;background:#fcc236;border-radius:50%;"></div>
<div class="t" style="top:593.18px;font-size:17.5px;line-height:17.5px;font-weight:400;color:#1b1d26;-webkit-text-stroke:0.2px currentColor;letter-spacing:0.2px;right:454px;margin-right:-0.2px;">0.8<span style="letter-spacing:-1.2px">1</span></div>
<div class="t" style="top:593.18px;font-size:17.5px;line-height:17.5px;font-weight:400;color:#1b1d26;-webkit-text-stroke:0.2px currentColor;letter-spacing:0.2px;right:386.79999999999995px;margin-right:-0.2px;"><span style="letter-spacing:-1.2px">1</span>.00</div>
<svg class="r" style="left:1233px;top:592.2px;" width="18" height="16" viewBox="0 0 18 16"><g fill="none" stroke="#9c9fa9" stroke-width="2"><path d="M1 14.5 V2 H17 V6" /><path d="M1 14.5 H6.5"/><circle cx="11.5" cy="10.3" r="3.6"/><path d="M14 12.8 L16.8 15.4" stroke-linecap="round"/></g><rect x="0" y="0.5" width="18" height="2.8" fill="#9c9fa9"/></svg>
<div class="r" style="left:1261.3px;top:589.2px;width:1.3px;height:22.5px;background:#c9cbd2;"></div>
<svg class="r" style="left:1272.2px;top:595.0px;" width="19" height="12" viewBox="0 0 19 12"><g fill="none" stroke="#9c9fa9" stroke-width="2.1" stroke-linecap="round"><path d="M7 1.5 H5.5 A4.5 4.5 0 0 0 5.5 10.5 H7"/><path d="M12 1.5 H13.5 A4.5 4.5 0 0 1 13.5 10.5 H12"/><path d="M6 6 H13"/></g></svg>
<svg class="r" style="left:1302.2px;top:594.0px;" width="16" height="14" viewBox="0 0 16 14"><g fill="none" stroke="#9c9fa9" stroke-width="1.9"><rect x="1" y="1" width="14" height="12"/><path d="M1.5 11.5 L5 8 L7.5 10 L11.5 5.5 L14.5 8.5" stroke-linejoin="round"/></g><circle cx="4.6" cy="4.6" r="1.2" fill="#9c9fa9"/></svg>
<svg class="r" style="left:1329.3999999999999px;top:593.0px;" width="19" height="19" viewBox="0 0 19 19"><g fill="none" stroke="#9c9fa9" stroke-width="1.9"><rect x="1" y="1" width="13.5" height="12.5"/><path d="M1.5 11.5 L5 8 L7.5 10 L11 6 L14 9" stroke-linejoin="round"/><path d="M3.5 16.5 H17 V4"/></g><circle cx="4.5" cy="4.5" r="1.1" fill="#9c9fa9"/></svg>
<svg class="r" style="left:1358.5px;top:592.5px;" width="17" height="17" viewBox="0 0 17 17"><circle cx="8.5" cy="8.5" r="7.3" fill="none" stroke="#9c9fa9" stroke-width="2"/><path d="M6.6 5.2 L11.6 8.5 L6.6 11.8Z" fill="#9c9fa9"/></svg>
<div class="t" style="top:592.40px;font-size:17.0px;line-height:17.0px;font-weight:400;color:#3d4049;-webkit-text-stroke:0.2px currentColor;left:1386.6px;">+2</div>
<div class="r" style="left:1386.1px;top:613.0px;width:21px;height:1.5px;background:repeating-linear-gradient(90deg,#858892 0 2.6px,transparent 2.6px 6px);"></div>
<div class="t" style="top:593.18px;font-size:17.5px;line-height:17.5px;font-weight:400;color:#1b1d26;-webkit-text-stroke:0.2px currentColor;letter-spacing:0.15px;right:71px;margin-right:-0.15px;">3 weeks</div>
<svg class="r" style="left:1534.5px;top:591.2px;" width="18" height="18" viewBox="0 0 18 18"><path d="M14.2 14.2 A7.2 7.2 0 1 1 14.3 4.1" fill="none" stroke="#0b63ce" stroke-width="2.4" stroke-linecap="round"/><path d="M16.1 1.6 V6.6 H11" fill="none" stroke="#0b63ce" stroke-width="2.4" stroke-linejoin="round" stroke-linecap="round"/></svg>
<div class="r" style="left:277.5px;top:701px;width:1298.5px;height:1px;background:#e3e4ea;"></div>
<div class="r" style="left:300px;top:643.3000000000001px;width:19.5px;height:19.5px;background:#fff;border:1.3px solid #c4c7cf;border-radius:4px;box-sizing:border-box;"></div>
<svg class="r" style="left:338.0px;top:643.3000000000001px;" width="19" height="19" viewBox="0 0 19 19"><circle cx="9.5" cy="9.5" r="8.3" fill="none" stroke="#90939d" stroke-width="2.1"/><path d="M9.5 5.2 V13.8 M5.2 9.5 H13.8" stroke="#90939d" stroke-width="2"/></svg>
<div class="t" style="top:644.79px;font-size:17.6px;line-height:17.6px;font-weight:400;color:#0b63ce;-webkit-text-stroke:0.2px currentColor;left:362.2px;">sofa set for living</div>
<div class="t" style="top:668.79px;font-size:17.6px;line-height:17.6px;font-weight:400;color:#0b63ce;-webkit-text-stroke:0.2px currentColor;left:362.2px;">room<svg style="display:inline-block;vertical-align:-1.5px;margin-left:7px" width="15" height="14" viewBox="0 0 15 14"><g fill="none" stroke="#9c9fa9" stroke-width="1.9"><rect x="1" y="1" width="13" height="12"/><path d="M1 5.2 H14 M10.3 1 V5.2"/></g></svg></div>
<div class="r" style="left:582px;top:643.5500000000001px;width:18.5px;height:18.5px;background:#fddf8a;border-radius:4px;"></div>
<div class="t" style="left:582px;width:18.5px;top:643.5500000000001px;height:18.5px;line-height:19.5px;text-align:center;font-size:14.3px;font-weight:700;color:#a65500;">C</div>
<div class="t" style="top:644.88px;font-size:17.5px;line-height:17.5px;font-weight:400;color:#1b1d26;-webkit-text-stroke:0.2px currentColor;letter-spacing:0.3px;right:868.8px;margin-right:-0.3px;">6,600</div>
<div class="t" style="top:644.88px;font-size:17.5px;line-height:17.5px;font-weight:400;color:#1b1d26;-webkit-text-stroke:0.2px currentColor;right:727px;"><span style="letter-spacing:-1.2px">1</span>2</div>
<div class="t" style="top:644.88px;font-size:17.5px;line-height:17.5px;font-weight:400;color:#1b1d26;-webkit-text-stroke:0.2px currentColor;right:656.2px;">65</div>
<div class="r" style="left:954px;top:645.8000000000001px;width:14px;height:14px;background:#fb8a3c;border-radius:50%;"></div>
<div class="t" style="top:644.88px;font-size:17.5px;line-height:17.5px;font-weight:400;color:#1b1d26;-webkit-text-stroke:0.2px currentColor;right:570.3px;">44</div>
<div class="r" style="left:1040.3px;top:645.8000000000001px;width:14px;height:14px;background:#fcc236;border-radius:50%;"></div>
<div class="t" style="top:644.88px;font-size:17.5px;line-height:17.5px;font-weight:400;color:#1b1d26;-webkit-text-stroke:0.2px currentColor;letter-spacing:0.2px;right:454px;margin-right:-0.2px;">0.8<span style="letter-spacing:-1.2px">1</span></div>
<div class="t" style="top:644.88px;font-size:17.5px;line-height:17.5px;font-weight:400;color:#1b1d26;-webkit-text-stroke:0.2px currentColor;letter-spacing:0.2px;right:386.79999999999995px;margin-right:-0.2px;"><span style="letter-spacing:-1.2px">1</span>.00</div>
<svg class="r" style="left:1233px;top:644.8000000000001px;" width="18" height="16" viewBox="0 0 18 16"><g fill="none" stroke="#9c9fa9" stroke-width="2"><path d="M1 14.5 V2 H17 V6" /><path d="M1 14.5 H6.5"/><circle cx="11.5" cy="10.3" r="3.6"/><path d="M14 12.8 L16.8 15.4" stroke-linecap="round"/></g><rect x="0" y="0.5" width="18" height="2.8" fill="#9c9fa9"/></svg>
<div class="r" style="left:1261.3px;top:641.8000000000001px;width:1.3px;height:22.5px;background:#c9cbd2;"></div>
<svg class="r" style="left:1272.2px;top:647.6px;" width="19" height="12" viewBox="0 0 19 12"><g fill="none" stroke="#9c9fa9" stroke-width="2.1" stroke-linecap="round"><path d="M7 1.5 H5.5 A4.5 4.5 0 0 0 5.5 10.5 H7"/><path d="M12 1.5 H13.5 A4.5 4.5 0 0 1 13.5 10.5 H12"/><path d="M6 6 H13"/></g></svg>
<svg class="r" style="left:1302.2px;top:646.6px;" width="16" height="14" viewBox="0 0 16 14"><g fill="none" stroke="#9c9fa9" stroke-width="1.9"><rect x="1" y="1" width="14" height="12"/><path d="M1.5 11.5 L5 8 L7.5 10 L11.5 5.5 L14.5 8.5" stroke-linejoin="round"/></g><circle cx="4.6" cy="4.6" r="1.2" fill="#9c9fa9"/></svg>
<svg class="r" style="left:1329.3999999999999px;top:645.6px;" width="19" height="19" viewBox="0 0 19 19"><g fill="none" stroke="#9c9fa9" stroke-width="1.9"><rect x="1" y="1" width="13.5" height="12.5"/><path d="M1.5 11.5 L5 8 L7.5 10 L11 6 L14 9" stroke-linejoin="round"/><path d="M3.5 16.5 H17 V4"/></g><circle cx="4.5" cy="4.5" r="1.1" fill="#9c9fa9"/></svg>
<svg class="r" style="left:1358.5px;top:645.1px;" width="17" height="17" viewBox="0 0 17 17"><circle cx="8.5" cy="8.5" r="7.3" fill="none" stroke="#9c9fa9" stroke-width="2"/><path d="M6.6 5.2 L11.6 8.5 L6.6 11.8Z" fill="#9c9fa9"/></svg>
<div class="t" style="top:645.00px;font-size:17.0px;line-height:17.0px;font-weight:400;color:#3d4049;-webkit-text-stroke:0.2px currentColor;left:1386.6px;">+2</div>
<div class="r" style="left:1386.1px;top:665.6px;width:21px;height:1.5px;background:repeating-linear-gradient(90deg,#858892 0 2.6px,transparent 2.6px 6px);"></div>
<div class="t" style="top:644.88px;font-size:17.5px;line-height:17.5px;font-weight:400;color:#1b1d26;-webkit-text-stroke:0.2px currentColor;letter-spacing:0.15px;right:71px;margin-right:-0.15px;">3 weeks</div>
<svg class="r" style="left:1534.5px;top:643.8000000000001px;" width="18" height="18" viewBox="0 0 18 18"><path d="M14.2 14.2 A7.2 7.2 0 1 1 14.3 4.1" fill="none" stroke="#0b63ce" stroke-width="2.4" stroke-linecap="round"/><path d="M16.1 1.6 V6.6 H11" fill="none" stroke="#0b63ce" stroke-width="2.4" stroke-linejoin="round" stroke-linecap="round"/></svg>
<div class="r" style="left:277.5px;top:753px;width:1298.5px;height:1px;background:#e3e4ea;"></div>
<div class="r" style="left:300px;top:718.7500000000001px;width:19.5px;height:19.5px;background:#fff;border:1.3px solid #c4c7cf;border-radius:4px;box-sizing:border-box;"></div>
<svg class="r" style="left:338.0px;top:718.7500000000001px;" width="19" height="19" viewBox="0 0 19 19"><circle cx="9.5" cy="9.5" r="8.3" fill="none" stroke="#90939d" stroke-width="2.1"/><path d="M9.5 5.2 V13.8 M5.2 9.5 H13.8" stroke="#90939d" stroke-width="2"/></svg>
<div class="t" style="top:721.14px;font-size:17.6px;line-height:17.6px;font-weight:400;color:#0b63ce;-webkit-text-stroke:0.2px currentColor;left:362.2px;">living room sofa sets<svg style="display:inline-block;vertical-align:-1.5px;margin-left:7px" width="15" height="14" viewBox="0 0 15 14"><g fill="none" stroke="#9c9fa9" stroke-width="1.9"><rect x="1" y="1" width="13" height="12"/><path d="M1 5.2 H14 M10.3 1 V5.2"/></g></svg></div>
<div class="r" style="left:582px;top:719.0000000000001px;width:18.5px;height:18.5px;background:#fddf8a;border-radius:4px;"></div>
<div class="t" style="left:582px;width:18.5px;top:719.0000000000001px;height:18.5px;line-height:19.5px;text-align:center;font-size:14.3px;font-weight:700;color:#a65500;">C</div>
<div class="t" style="top:721.23px;font-size:17.5px;line-height:17.5px;font-weight:400;color:#1b1d26;-webkit-text-stroke:0.2px currentColor;letter-spacing:0.3px;right:868.8px;margin-right:-0.3px;">5,400</div>
<div class="t" style="top:721.23px;font-size:17.5px;line-height:17.5px;font-weight:400;color:#1b1d26;-webkit-text-stroke:0.2px currentColor;right:727px;"><span style="letter-spacing:-1.2px">1</span>0</div>
<div class="t" style="top:721.23px;font-size:17.5px;line-height:17.5px;font-weight:400;color:#1b1d26;-webkit-text-stroke:0.2px currentColor;right:656.2px;">65</div>
<div class="r" style="left:954px;top:721.2500000000001px;width:14px;height:14px;background:#fb8a3c;border-radius:50%;"></div>
<div class="t" style="top:721.23px;font-size:17.5px;line-height:17.5px;font-weight:400;color:#1b1d26;-webkit-text-stroke:0.2px currentColor;right:570.3px;">32</div>
<div class="r" style="left:1040.3px;top:721.2500000000001px;width:14px;height:14px;background:#fcc236;border-radius:50%;"></div>
<div class="t" style="top:721.23px;font-size:17.5px;line-height:17.5px;font-weight:400;color:#1b1d26;-webkit-text-stroke:0.2px currentColor;letter-spacing:0.2px;right:454px;margin-right:-0.2px;">0.8<span style="letter-spacing:-1.2px">1</span></div>
<div class="t" style="top:721.23px;font-size:17.5px;line-height:17.5px;font-weight:400;color:#1b1d26;-webkit-text-stroke:0.2px currentColor;letter-spacing:0.2px;right:386.79999999999995px;margin-right:-0.2px;"><span style="letter-spacing:-1.2px">1</span>.00</div>
<svg class="r" style="left:1233px;top:720.2500000000001px;" width="18" height="16" viewBox="0 0 18 16"><g fill="none" stroke="#9c9fa9" stroke-width="2"><path d="M1 14.5 V2 H17 V6" /><path d="M1 14.5 H6.5"/><circle cx="11.5" cy="10.3" r="3.6"/><path d="M14 12.8 L16.8 15.4" stroke-linecap="round"/></g><rect x="0" y="0.5" width="18" height="2.8" fill="#9c9fa9"/></svg>
<div class="r" style="left:1261.3px;top:717.2500000000001px;width:1.3px;height:22.5px;background:#c9cbd2;"></div>
<svg class="r" style="left:1272.2px;top:723.0500000000001px;" width="19" height="12" viewBox="0 0 19 12"><g fill="none" stroke="#9c9fa9" stroke-width="2.1" stroke-linecap="round"><path d="M7 1.5 H5.5 A4.5 4.5 0 0 0 5.5 10.5 H7"/><path d="M12 1.5 H13.5 A4.5 4.5 0 0 1 13.5 10.5 H12"/><path d="M6 6 H13"/></g></svg>
<svg class="r" style="left:1302.2px;top:722.0500000000001px;" width="16" height="14" viewBox="0 0 16 14"><g fill="none" stroke="#9c9fa9" stroke-width="1.9"><rect x="1" y="1" width="14" height="12"/><path d="M1.5 11.5 L5 8 L7.5 10 L11.5 5.5 L14.5 8.5" stroke-linejoin="round"/></g><circle cx="4.6" cy="4.6" r="1.2" fill="#9c9fa9"/></svg>
<svg class="r" style="left:1330.1px;top:720.5500000000001px;" width="17" height="17" viewBox="0 0 17 17"><circle cx="8.5" cy="8.5" r="7.3" fill="none" stroke="#9c9fa9" stroke-width="2"/><path d="M6.6 5.2 L11.6 8.5 L6.6 11.8Z" fill="#9c9fa9"/></svg>
<svg class="r" style="left:1357.5px;top:720.5500000000001px;" width="19.5" height="17" viewBox="0 0 19.5 17"><rect x="0.3" y="0.3" width="8" height="2.3" rx="1.15" fill="#9c9fa9"/><rect x="0.3" y="5.0" width="8" height="2.3" rx="1.15" fill="#9c9fa9"/><rect x="0.3" y="9.7" width="8" height="2.3" rx="1.15" fill="#9c9fa9"/><rect x="0.3" y="14.4" width="8" height="2.3" rx="1.15" fill="#9c9fa9"/><rect x="10.9" y="0.3" width="8" height="2.3" rx="1.15" fill="#9c9fa9"/><rect x="10.9" y="5.0" width="8" height="2.3" rx="1.15" fill="#9c9fa9"/><rect x="10.9" y="9.7" width="8" height="2.3" rx="1.15" fill="#9c9fa9"/><rect x="10.9" y="14.4" width="8" height="2.3" rx="1.15" fill="#9c9fa9"/></svg>
<svg class="r" style="left:1387.5px;top:719.0500000000001px;" width="16" height="20" viewBox="0 0 16 20"><g fill="none" stroke="#9c9fa9" stroke-width="1.8" stroke-linejoin="round"><path d="M0.8 1.2 H3 L4.2 8.5 H13.5 L14.8 3.3 H3.6"/></g><circle cx="5" cy="11" r="1.1" fill="#9c9fa9"/><circle cx="12.5" cy="11" r="1.1" fill="#9c9fa9"/><path d="M3 14.6 l0.9 1.6 1.8 0.1 -1.3 1.2 0.4 1.8 -1.8 -0.9 -1.6 0.9 0.4 -1.8 -1.3 -1.2 1.8 -0.1Z" fill="#9c9fa9"/><path d="M8 14.6 l0.9 1.6 1.8 0.1 -1.3 1.2 0.4 1.8 -1.8 -0.9 -1.6 0.9 0.4 -1.8 -1.3 -1.2 1.8 -0.1Z" fill="#9c9fa9"/><path d="M13 14.6 l0.9 1.6 1.8 0.1 -1.3 1.2 0.4 1.8 -1.8 -0.9 -1.6 0.9 0.4 -1.8 -1.3 -1.2 1.8 -0.1Z" fill="#9c9fa9"/></svg>
<div class="t" style="top:721.23px;font-size:17.5px;line-height:17.5px;font-weight:400;color:#1b1d26;-webkit-text-stroke:0.2px currentColor;letter-spacing:0.15px;right:71px;margin-right:-0.15px;">3 weeks</div>
<svg class="r" style="left:1534.5px;top:719.2500000000001px;" width="18" height="18" viewBox="0 0 18 18"><path d="M14.2 14.2 A7.2 7.2 0 1 1 14.3 4.1" fill="none" stroke="#0b63ce" stroke-width="2.4" stroke-linecap="round"/><path d="M16.1 1.6 V6.6 H11" fill="none" stroke="#0b63ce" stroke-width="2.4" stroke-linejoin="round" stroke-linecap="round"/></svg>
<div class="r" style="left:277.5px;top:805px;width:1298.5px;height:1px;background:#e3e4ea;"></div>
<div class="r" style="left:300px;top:770.85px;width:19.5px;height:19.5px;background:#fff;border:1.3px solid #c4c7cf;border-radius:4px;box-sizing:border-box;"></div>
<svg class="r" style="left:338.0px;top:770.85px;" width="19" height="19" viewBox="0 0 19 19"><circle cx="9.5" cy="9.5" r="8.3" fill="none" stroke="#90939d" stroke-width="2.1"/><path d="M9.5 5.2 V13.8 M5.2 9.5 H13.8" stroke="#90939d" stroke-width="2"/></svg>
<div class="t" style="top:773.24px;font-size:17.6px;line-height:17.6px;font-weight:400;color:#0b63ce;-webkit-text-stroke:0.2px currentColor;left:362.2px;">recliner sofa set<svg style="display:inline-block;vertical-align:-1.5px;margin-left:7px" width="15" height="14" viewBox="0 0 15 14"><g fill="none" stroke="#9c9fa9" stroke-width="1.9"><rect x="1" y="1" width="13" height="12"/><path d="M1 5.2 H14 M10.3 1 V5.2"/></g></svg></div>
<div class="r" style="left:582px;top:771.1px;width:18.5px;height:18.5px;background:#c6e4fd;border-radius:4px;"></div>
<div class="t" style="left:582px;width:18.5px;top:771.1px;height:18.5px;line-height:19.5px;text-align:center;font-size:14.3px;font-weight:700;color:#0d5fc4;">I</div>
<div class="r" style="left:605.2px;top:771.1px;width:18.5px;height:18.5px;background:#9ff0c8;border-radius:4px;"></div>
<div class="t" style="left:605.2px;width:18.5px;top:771.1px;height:18.5px;line-height:19.5px;text-align:center;font-size:14.3px;font-weight:700;color:#0a6a4c;">T</div>
<div class="t" style="top:773.33px;font-size:17.5px;line-height:17.5px;font-weight:400;color:#1b1d26;-webkit-text-stroke:0.2px currentColor;letter-spacing:0.3px;right:868.8px;margin-right:-0.3px;">5,400</div>
<div class="t" style="top:773.33px;font-size:17.5px;line-height:17.5px;font-weight:400;color:#1b1d26;-webkit-text-stroke:0.2px currentColor;right:727px;"><span style="letter-spacing:-1.2px">1</span>0</div>
<div class="t" style="top:773.33px;font-size:17.5px;line-height:17.5px;font-weight:400;color:#1b1d26;-webkit-text-stroke:0.2px currentColor;right:656.2px;">55</div>
<div class="r" style="left:954px;top:773.35px;width:14px;height:14px;background:#fb8a3c;border-radius:50%;"></div>
<div class="t" style="top:773.33px;font-size:17.5px;line-height:17.5px;font-weight:400;color:#1b1d26;-webkit-text-stroke:0.2px currentColor;right:570.3px;">2<span style="letter-spacing:-1.2px">1</span></div>
<div class="r" style="left:1040.3px;top:773.35px;width:14px;height:14px;background:#4fd09c;border-radius:50%;"></div>
<div class="t" style="top:773.33px;font-size:17.5px;line-height:17.5px;font-weight:400;color:#1b1d26;-webkit-text-stroke:0.2px currentColor;letter-spacing:0.2px;right:454px;margin-right:-0.2px;">0.87</div>
<div class="t" style="top:773.33px;font-size:17.5px;line-height:17.5px;font-weight:400;color:#1b1d26;-webkit-text-stroke:0.2px currentColor;letter-spacing:0.2px;right:386.79999999999995px;margin-right:-0.2px;"><span style="letter-spacing:-1.2px">1</span>.00</div>
<svg class="r" style="left:1233px;top:772.35px;" width="18" height="16" viewBox="0 0 18 16"><g fill="none" stroke="#9c9fa9" stroke-width="2"><path d="M1 14.5 V2 H17 V6" /><path d="M1 14.5 H6.5"/><circle cx="11.5" cy="10.3" r="3.6"/><path d="M14 12.8 L16.8 15.4" stroke-linecap="round"/></g><rect x="0" y="0.5" width="18" height="2.8" fill="#9c9fa9"/></svg>
<div class="r" style="left:1261.3px;top:769.35px;width:1.3px;height:22.5px;background:#c9cbd2;"></div>
<svg class="r" style="left:1272.2px;top:775.15px;" width="19" height="12" viewBox="0 0 19 12"><g fill="none" stroke="#9c9fa9" stroke-width="2.1" stroke-linecap="round"><path d="M7 1.5 H5.5 A4.5 4.5 0 0 0 5.5 10.5 H7"/><path d="M12 1.5 H13.5 A4.5 4.5 0 0 1 13.5 10.5 H12"/><path d="M6 6 H13"/></g></svg>
<svg class="r" style="left:1302.2px;top:774.15px;" width="16" height="14" viewBox="0 0 16 14"><g fill="none" stroke="#9c9fa9" stroke-width="1.9"><rect x="1" y="1" width="14" height="12"/><path d="M1.5 11.5 L5 8 L7.5 10 L11.5 5.5 L14.5 8.5" stroke-linejoin="round"/></g><circle cx="4.6" cy="4.6" r="1.2" fill="#9c9fa9"/></svg>
<svg class="r" style="left:1329.3999999999999px;top:773.15px;" width="19" height="19" viewBox="0 0 19 19"><g fill="none" stroke="#9c9fa9" stroke-width="1.9"><rect x="1" y="1" width="13.5" height="12.5"/><path d="M1.5 11.5 L5 8 L7.5 10 L11 6 L14 9" stroke-linejoin="round"/><path d="M3.5 16.5 H17 V4"/></g><circle cx="4.5" cy="4.5" r="1.1" fill="#9c9fa9"/></svg>
<svg class="r" style="left:1358.5px;top:772.65px;" width="17" height="17" viewBox="0 0 17 17"><circle cx="8.5" cy="8.5" r="7.3" fill="none" stroke="#9c9fa9" stroke-width="2"/><path d="M6.6 5.2 L11.6 8.5 L6.6 11.8Z" fill="#9c9fa9"/></svg>
<div class="t" style="top:772.55px;font-size:17.0px;line-height:17.0px;font-weight:400;color:#3d4049;-webkit-text-stroke:0.2px currentColor;left:1386.6px;">+3</div>
<div class="r" style="left:1386.1px;top:793.15px;width:21px;height:1.5px;background:repeating-linear-gradient(90deg,#858892 0 2.6px,transparent 2.6px 6px);"></div>
<div class="t" style="top:773.33px;font-size:17.5px;line-height:17.5px;font-weight:400;color:#1b1d26;-webkit-text-stroke:0.2px currentColor;letter-spacing:0.15px;right:71px;margin-right:-0.15px;">2 weeks</div>
<svg class="r" style="left:1534.5px;top:771.35px;" width="18" height="18" viewBox="0 0 18 18"><path d="M14.2 14.2 A7.2 7.2 0 1 1 14.3 4.1" fill="none" stroke="#0b63ce" stroke-width="2.4" stroke-linecap="round"/><path d="M16.1 1.6 V6.6 H11" fill="none" stroke="#0b63ce" stroke-width="2.4" stroke-linejoin="round" stroke-linecap="round"/></svg>
<div class="r" style="left:277.5px;top:857px;width:1298.5px;height:1px;background:#e3e4ea;"></div>
<div class="r" style="left:300px;top:822.9499999999999px;width:19.5px;height:19.5px;background:#fff;border:1.3px solid #c4c7cf;border-radius:4px;box-sizing:border-box;"></div>
<svg class="r" style="left:338.0px;top:822.9499999999999px;" width="19" height="19" viewBox="0 0 19 19"><circle cx="9.5" cy="9.5" r="8.3" fill="none" stroke="#90939d" stroke-width="2.1"/><path d="M9.5 5.2 V13.8 M5.2 9.5 H13.8" stroke="#90939d" stroke-width="2"/></svg>
<div class="t" style="top:825.34px;font-size:17.6px;line-height:17.6px;font-weight:400;color:#0b63ce;-webkit-text-stroke:0.2px currentColor;left:362.2px;">sofas set<svg style="display:inline-block;vertical-align:-1.5px;margin-left:7px" width="15" height="14" viewBox="0 0 15 14"><g fill="none" stroke="#9c9fa9" stroke-width="1.9"><rect x="1" y="1" width="13" height="12"/><path d="M1 5.2 H14 M10.3 1 V5.2"/></g></svg></div>
<div class="r" style="left:582px;top:823.1999999999999px;width:18.5px;height:18.5px;background:#fddf8a;border-radius:4px;"></div>
<div class="t" style="left:582px;width:18.5px;top:823.1999999999999px;height:18.5px;line-height:19.5px;text-align:center;font-size:14.3px;font-weight:700;color:#a65500;">C</div>
<div class="t" style="top:825.43px;font-size:17.5px;line-height:17.5px;font-weight:400;color:#1b1d26;-webkit-text-stroke:0.2px currentColor;letter-spacing:0.3px;right:868.8px;margin-right:-0.3px;">5,400</div>
<div class="t" style="top:825.43px;font-size:17.5px;line-height:17.5px;font-weight:400;color:#1b1d26;-webkit-text-stroke:0.2px currentColor;right:727px;"><span style="letter-spacing:-1.2px">1</span>0</div>
<div class="t" style="top:825.43px;font-size:17.5px;line-height:17.5px;font-weight:400;color:#1b1d26;-webkit-text-stroke:0.2px currentColor;right:656.2px;">66</div>
<div class="r" style="left:954px;top:825.4499999999999px;width:14px;height:14px;background:#fb8a3c;border-radius:50%;"></div>
<div class="t" style="top:825.43px;font-size:17.5px;line-height:17.5px;font-weight:400;color:#1b1d26;-webkit-text-stroke:0.2px currentColor;right:570.3px;">32</div>
<div class="r" style="left:1040.3px;top:825.4499999999999px;width:14px;height:14px;background:#fcc236;border-radius:50%;"></div>
<div class="t" style="top:825.43px;font-size:17.5px;line-height:17.5px;font-weight:400;color:#1b1d26;-webkit-text-stroke:0.2px currentColor;letter-spacing:0.2px;right:454px;margin-right:-0.2px;">0.82</div>
<div class="t" style="top:825.43px;font-size:17.5px;line-height:17.5px;font-weight:400;color:#1b1d26;-webkit-text-stroke:0.2px currentColor;letter-spacing:0.2px;right:386.79999999999995px;margin-right:-0.2px;"><span style="letter-spacing:-1.2px">1</span>.00</div>
<svg class="r" style="left:1233px;top:824.4499999999999px;" width="18" height="16" viewBox="0 0 18 16"><g fill="none" stroke="#9c9fa9" stroke-width="2"><path d="M1 14.5 V2 H17 V6" /><path d="M1 14.5 H6.5"/><circle cx="11.5" cy="10.3" r="3.6"/><path d="M14 12.8 L16.8 15.4" stroke-linecap="round"/></g><rect x="0" y="0.5" width="18" height="2.8" fill="#9c9fa9"/></svg>
<div class="r" style="left:1261.3px;top:821.4499999999999px;width:1.3px;height:22.5px;background:#c9cbd2;"></div>
<svg class="r" style="left:1272.2px;top:827.2499999999999px;" width="19" height="12" viewBox="0 0 19 12"><g fill="none" stroke="#9c9fa9" stroke-width="2.1" stroke-linecap="round"><path d="M7 1.5 H5.5 A4.5 4.5 0 0 0 5.5 10.5 H7"/><path d="M12 1.5 H13.5 A4.5 4.5 0 0 1 13.5 10.5 H12"/><path d="M6 6 H13"/></g></svg>
<svg class="r" style="left:1302.2px;top:826.2499999999999px;" width="16" height="14" viewBox="0 0 16 14"><g fill="none" stroke="#9c9fa9" stroke-width="1.9"><rect x="1" y="1" width="14" height="12"/><path d="M1.5 11.5 L5 8 L7.5 10 L11.5 5.5 L14.5 8.5" stroke-linejoin="round"/></g><circle cx="4.6" cy="4.6" r="1.2" fill="#9c9fa9"/></svg>
<svg class="r" style="left:1330.1px;top:824.7499999999999px;" width="17" height="17" viewBox="0 0 17 17"><circle cx="8.5" cy="8.5" r="7.3" fill="none" stroke="#9c9fa9" stroke-width="2"/><path d="M6.6 5.2 L11.6 8.5 L6.6 11.8Z" fill="#9c9fa9"/></svg>
<svg class="r" style="left:1359px;top:823.4499999999999px;" width="16" height="19.5" viewBox="0 0 16 19.5"><path d="M8 18 C5.6 15.8 1.1 12.2 1.1 7.9 A6.9 6.9 0 0 1 14.9 7.9 C14.9 12.2 10.4 15.8 8 18Z" fill="none" stroke="#9c9fa9" stroke-width="2" stroke-linejoin="round"/><circle cx="8" cy="7.9" r="2.1" fill="#9c9fa9"/></svg>
<div class="t" style="top:824.65px;font-size:17.0px;line-height:17.0px;font-weight:400;color:#3d4049;-webkit-text-stroke:0.2px currentColor;left:1386.6px;">+2</div>
<div class="r" style="left:1386.1px;top:845.2499999999999px;width:21px;height:1.5px;background:repeating-linear-gradient(90deg,#858892 0 2.6px,transparent 2.6px 6px);"></div>
<div class="t" style="top:825.43px;font-size:17.5px;line-height:17.5px;font-weight:400;color:#1b1d26;-webkit-text-stroke:0.2px currentColor;letter-spacing:0.15px;right:71px;margin-right:-0.15px;">2 weeks</div>
<svg class="r" style="left:1534.5px;top:823.4499999999999px;" width="18" height="18" viewBox="0 0 18 18"><path d="M14.2 14.2 A7.2 7.2 0 1 1 14.3 4.1" fill="none" stroke="#0b63ce" stroke-width="2.4" stroke-linecap="round"/><path d="M16.1 1.6 V6.6 H11" fill="none" stroke="#0b63ce" stroke-width="2.4" stroke-linejoin="round" stroke-linecap="round"/></svg>
<div class="r" style="left:277.5px;top:910px;width:1298.5px;height:1px;background:#e3e4ea;"></div>
<div class="r" style="left:300px;top:875.0500000000001px;width:19.5px;height:19.5px;background:#fff;border:1.3px solid #c4c7cf;border-radius:4px;box-sizing:border-box;"></div>
<svg class="r" style="left:338.0px;top:875.0500000000001px;" width="19" height="19" viewBox="0 0 19 19"><circle cx="9.5" cy="9.5" r="8.3" fill="none" stroke="#90939d" stroke-width="2.1"/><path d="M9.5 5.2 V13.8 M5.2 9.5 H13.8" stroke="#90939d" stroke-width="2"/></svg>
<div class="t" style="top:877.44px;font-size:17.6px;line-height:17.6px;font-weight:400;color:#0b63ce;-webkit-text-stroke:0.2px currentColor;left:362.2px;">outdoor sofa set<svg style="display:inline-block;vertical-align:-1.5px;margin-left:7px" width="15" height="14" viewBox="0 0 15 14"><g fill="none" stroke="#9c9fa9" stroke-width="1.9"><rect x="1" y="1" width="13" height="12"/><path d="M1 5.2 H14 M10.3 1 V5.2"/></g></svg></div>
<div class="r" style="left:582px;top:875.3000000000001px;width:18.5px;height:18.5px;background:#c6e4fd;border-radius:4px;"></div>
<div class="t" style="left:582px;width:18.5px;top:875.3000000000001px;height:18.5px;line-height:19.5px;text-align:center;font-size:14.3px;font-weight:700;color:#0d5fc4;">I</div>
<div class="r" style="left:605.2px;top:875.3000000000001px;width:18.5px;height:18.5px;background:#9ff0c8;border-radius:4px;"></div>
<div class="t" style="left:605.2px;width:18.5px;top:875.3000000000001px;height:18.5px;line-height:19.5px;text-align:center;font-size:14.3px;font-weight:700;color:#0a6a4c;">T</div>
<div class="t" style="top:877.53px;font-size:17.5px;line-height:17.5px;font-weight:400;color:#1b1d26;-webkit-text-stroke:0.2px currentColor;letter-spacing:0.3px;right:868.8px;margin-right:-0.3px;">4,400</div>
<div class="t" style="top:877.53px;font-size:17.5px;line-height:17.5px;font-weight:400;color:#1b1d26;-webkit-text-stroke:0.2px currentColor;right:727px;">8</div>
<div class="t" style="top:877.53px;font-size:17.5px;line-height:17.5px;font-weight:400;color:#1b1d26;-webkit-text-stroke:0.2px currentColor;right:656.2px;">72</div>
<div class="r" style="left:954px;top:877.5500000000001px;width:14px;height:14px;background:#f2443c;border-radius:50%;"></div>
<div class="t" style="top:877.53px;font-size:17.5px;line-height:17.5px;font-weight:400;color:#1b1d26;-webkit-text-stroke:0.2px currentColor;right:570.3px;">47</div>
<div class="r" style="left:1040.3px;top:877.5500000000001px;width:14px;height:14px;background:#fcc236;border-radius:50%;"></div>
<div class="t" style="top:877.53px;font-size:17.5px;line-height:17.5px;font-weight:400;color:#1b1d26;-webkit-text-stroke:0.2px currentColor;letter-spacing:0.2px;right:454px;margin-right:-0.2px;"><span style="letter-spacing:-1.2px">1</span>.<span style="letter-spacing:-1.2px">1</span>6</div>
<div class="t" style="top:877.53px;font-size:17.5px;line-height:17.5px;font-weight:400;color:#1b1d26;-webkit-text-stroke:0.2px currentColor;letter-spacing:0.2px;right:386.79999999999995px;margin-right:-0.2px;"><span style="letter-spacing:-1.2px">1</span>.00</div>
<svg class="r" style="left:1233px;top:876.5500000000001px;" width="18" height="16" viewBox="0 0 18 16"><g fill="none" stroke="#9c9fa9" stroke-width="2"><path d="M1 14.5 V2 H17 V6" /><path d="M1 14.5 H6.5"/><circle cx="11.5" cy="10.3" r="3.6"/><path d="M14 12.8 L16.8 15.4" stroke-linecap="round"/></g><rect x="0" y="0.5" width="18" height="2.8" fill="#9c9fa9"/></svg>
<div class="r" style="left:1261.3px;top:873.5500000000001px;width:1.3px;height:22.5px;background:#c9cbd2;"></div>
<svg class="r" style="left:1272.2px;top:879.35px;" width="19" height="12" viewBox="0 0 19 12"><g fill="none" stroke="#9c9fa9" stroke-width="2.1" stroke-linecap="round"><path d="M7 1.5 H5.5 A4.5 4.5 0 0 0 5.5 10.5 H7"/><path d="M12 1.5 H13.5 A4.5 4.5 0 0 1 13.5 10.5 H12"/><path d="M6 6 H13"/></g></svg>
<svg class="r" style="left:1302.2px;top:878.35px;" width="16" height="14" viewBox="0 0 16 14"><g fill="none" stroke="#9c9fa9" stroke-width="1.9"><rect x="1" y="1" width="14" height="12"/><path d="M1.5 11.5 L5 8 L7.5 10 L11.5 5.5 L14.5 8.5" stroke-linejoin="round"/></g><circle cx="4.6" cy="4.6" r="1.2" fill="#9c9fa9"/></svg>
<svg class="r" style="left:1330.1px;top:876.85px;" width="17" height="17" viewBox="0 0 17 17"><circle cx="8.5" cy="8.5" r="7.3" fill="none" stroke="#9c9fa9" stroke-width="2"/><path d="M6.6 5.2 L11.6 8.5 L6.6 11.8Z" fill="#9c9fa9"/></svg>
<svg class="r" style="left:1357.5px;top:876.85px;" width="19.5" height="17" viewBox="0 0 19.5 17"><rect x="0.3" y="0.3" width="8" height="2.3" rx="1.15" fill="#9c9fa9"/><rect x="0.3" y="5.0" width="8" height="2.3" rx="1.15" fill="#9c9fa9"/><rect x="0.3" y="9.7" width="8" height="2.3" rx="1.15" fill="#9c9fa9"/><rect x="0.3" y="14.4" width="8" height="2.3" rx="1.15" fill="#9c9fa9"/><rect x="10.9" y="0.3" width="8" height="2.3" rx="1.15" fill="#9c9fa9"/><rect x="10.9" y="5.0" width="8" height="2.3" rx="1.15" fill="#9c9fa9"/><rect x="10.9" y="9.7" width="8" height="2.3" rx="1.15" fill="#9c9fa9"/><rect x="10.9" y="14.4" width="8" height="2.3" rx="1.15" fill="#9c9fa9"/></svg>
<svg class="r" style="left:1387.5px;top:875.35px;" width="16" height="20" viewBox="0 0 16 20"><g fill="none" stroke="#9c9fa9" stroke-width="1.8" stroke-linejoin="round"><path d="M0.8 1.2 H3 L4.2 8.5 H13.5 L14.8 3.3 H3.6"/></g><circle cx="5" cy="11" r="1.1" fill="#9c9fa9"/><circle cx="12.5" cy="11" r="1.1" fill="#9c9fa9"/><path d="M3 14.6 l0.9 1.6 1.8 0.1 -1.3 1.2 0.4 1.8 -1.8 -0.9 -1.6 0.9 0.4 -1.8 -1.3 -1.2 1.8 -0.1Z" fill="#9c9fa9"/><path d="M8 14.6 l0.9 1.6 1.8 0.1 -1.3 1.2 0.4 1.8 -1.8 -0.9 -1.6 0.9 0.4 -1.8 -1.3 -1.2 1.8 -0.1Z" fill="#9c9fa9"/><path d="M13 14.6 l0.9 1.6 1.8 0.1 -1.3 1.2 0.4 1.8 -1.8 -0.9 -1.6 0.9 0.4 -1.8 -1.3 -1.2 1.8 -0.1Z" fill="#9c9fa9"/></svg>
<div class="t" style="top:877.53px;font-size:17.5px;line-height:17.5px;font-weight:400;color:#1b1d26;-webkit-text-stroke:0.2px currentColor;letter-spacing:0.15px;right:71px;margin-right:-0.15px;">2 weeks</div>
<svg class="r" style="left:1534.5px;top:875.5500000000001px;" width="18" height="18" viewBox="0 0 18 18"><path d="M14.2 14.2 A7.2 7.2 0 1 1 14.3 4.1" fill="none" stroke="#0b63ce" stroke-width="2.4" stroke-linecap="round"/><path d="M16.1 1.6 V6.6 H11" fill="none" stroke="#0b63ce" stroke-width="2.4" stroke-linejoin="round" stroke-linecap="round"/></svg>
<div class="r" style="left:277.5px;top:962px;width:1298.5px;height:1px;background:#e3e4ea;"></div>
<div class="r" style="left:300px;top:927.15px;width:19.5px;height:19.5px;background:#fff;border:1.3px solid #c4c7cf;border-radius:4px;box-sizing:border-box;"></div>
<svg class="r" style="left:338.0px;top:927.15px;" width="19" height="19" viewBox="0 0 19 19"><circle cx="9.5" cy="9.5" r="8.3" fill="none" stroke="#90939d" stroke-width="2.1"/><path d="M9.5 5.2 V13.8 M5.2 9.5 H13.8" stroke="#90939d" stroke-width="2"/></svg>
<div class="t" style="top:929.54px;font-size:17.6px;line-height:17.6px;font-weight:400;color:#0b63ce;-webkit-text-stroke:0.2px currentColor;left:362.2px;">sofa sets sofa<svg style="display:inline-block;vertical-align:-1.5px;margin-left:7px" width="15" height="14" viewBox="0 0 15 14"><g fill="none" stroke="#9c9fa9" stroke-width="1.9"><rect x="1" y="1" width="13" height="12"/><path d="M1 5.2 H14 M10.3 1 V5.2"/></g></svg></div>
<div class="r" style="left:582px;top:927.4px;width:18.5px;height:18.5px;background:#c6e4fd;border-radius:4px;"></div>
<div class="t" style="left:582px;width:18.5px;top:927.4px;height:18.5px;line-height:19.5px;text-align:center;font-size:14.3px;font-weight:700;color:#0d5fc4;">I</div>
<div class="r" style="left:605.2px;top:927.4px;width:18.5px;height:18.5px;background:#9ff0c8;border-radius:4px;"></div>
<div class="t" style="left:605.2px;width:18.5px;top:927.4px;height:18.5px;line-height:19.5px;text-align:center;font-size:14.3px;font-weight:700;color:#0a6a4c;">T</div>
<div class="t" style="top:929.63px;font-size:17.5px;line-height:17.5px;font-weight:400;color:#1b1d26;-webkit-text-stroke:0.2px currentColor;letter-spacing:0.3px;right:868.8px;margin-right:-0.3px;">4,400</div>
<div class="t" style="top:929.63px;font-size:17.5px;line-height:17.5px;font-weight:400;color:#1b1d26;-webkit-text-stroke:0.2px currentColor;right:727px;">8</div>
<div class="t" style="top:929.63px;font-size:17.5px;line-height:17.5px;font-weight:400;color:#1b1d26;-webkit-text-stroke:0.2px currentColor;right:656.2px;">55</div>
<div class="r" style="left:954px;top:929.65px;width:14px;height:14px;background:#fb8a3c;border-radius:50%;"></div>
<div class="t" style="top:929.63px;font-size:17.5px;line-height:17.5px;font-weight:400;color:#1b1d26;-webkit-text-stroke:0.2px currentColor;right:570.3px;">22</div>
<div class="r" style="left:1040.3px;top:929.65px;width:14px;height:14px;background:#4fd09c;border-radius:50%;"></div>
<div class="t" style="top:929.63px;font-size:17.5px;line-height:17.5px;font-weight:400;color:#1b1d26;-webkit-text-stroke:0.2px currentColor;letter-spacing:0.2px;right:454px;margin-right:-0.2px;">0.82</div>
<div class="t" style="top:929.63px;font-size:17.5px;line-height:17.5px;font-weight:400;color:#1b1d26;-webkit-text-stroke:0.2px currentColor;letter-spacing:0.2px;right:386.79999999999995px;margin-right:-0.2px;"><span style="letter-spacing:-1.2px">1</span>.00</div>
<svg class="r" style="left:1233px;top:928.65px;" width="18" height="16" viewBox="0 0 18 16"><g fill="none" stroke="#9c9fa9" stroke-width="2"><path d="M1 14.5 V2 H17 V6" /><path d="M1 14.5 H6.5"/><circle cx="11.5" cy="10.3" r="3.6"/><path d="M14 12.8 L16.8 15.4" stroke-linecap="round"/></g><rect x="0" y="0.5" width="18" height="2.8" fill="#9c9fa9"/></svg>
<div class="r" style="left:1261.3px;top:925.65px;width:1.3px;height:22.5px;background:#c9cbd2;"></div>
<svg class="r" style="left:1272.2px;top:931.4499999999999px;" width="19" height="12" viewBox="0 0 19 12"><g fill="none" stroke="#9c9fa9" stroke-width="2.1" stroke-linecap="round"><path d="M7 1.5 H5.5 A4.5 4.5 0 0 0 5.5 10.5 H7"/><path d="M12 1.5 H13.5 A4.5 4.5 0 0 1 13.5 10.5 H12"/><path d="M6 6 H13"/></g></svg>
<svg class="r" style="left:1302.2px;top:930.4499999999999px;" width="16" height="14" viewBox="0 0 16 14"><g fill="none" stroke="#9c9fa9" stroke-width="1.9"><rect x="1" y="1" width="14" height="12"/><path d="M1.5 11.5 L5 8 L7.5 10 L11.5 5.5 L14.5 8.5" stroke-linejoin="round"/></g><circle cx="4.6" cy="4.6" r="1.2" fill="#9c9fa9"/></svg>
<svg class="r" style="left:1330.1px;top:928.9499999999999px;" width="17" height="17" viewBox="0 0 17 17"><circle cx="8.5" cy="8.5" r="7.3" fill="none" stroke="#9c9fa9" stroke-width="2"/><path d="M6.6 5.2 L11.6 8.5 L6.6 11.8Z" fill="#9c9fa9"/></svg>
<svg class="r" style="left:1357.5px;top:928.9499999999999px;" width="19.5" height="17" viewBox="0 0 19.5 17"><rect x="0.3" y="0.3" width="8" height="2.3" rx="1.15" fill="#9c9fa9"/><rect x="0.3" y="5.0" width="8" height="2.3" rx="1.15" fill="#9c9fa9"/><rect x="0.3" y="9.7" width="8" height="2.3" rx="1.15" fill="#9c9fa9"/><rect x="0.3" y="14.4" width="8" height="2.3" rx="1.15" fill="#9c9fa9"/><rect x="10.9" y="0.3" width="8" height="2.3" rx="1.15" fill="#9c9fa9"/><rect x="10.9" y="5.0" width="8" height="2.3" rx="1.15" fill="#9c9fa9"/><rect x="10.9" y="9.7" width="8" height="2.3" rx="1.15" fill="#9c9fa9"/><rect x="10.9" y="14.4" width="8" height="2.3" rx="1.15" fill="#9c9fa9"/></svg>
<svg class="r" style="left:1387.5px;top:927.4499999999999px;" width="16" height="20" viewBox="0 0 16 20"><g fill="none" stroke="#9c9fa9" stroke-width="1.8" stroke-linejoin="round"><path d="M0.8 1.2 H3 L4.2 8.5 H13.5 L14.8 3.3 H3.6"/></g><circle cx="5" cy="11" r="1.1" fill="#9c9fa9"/><circle cx="12.5" cy="11" r="1.1" fill="#9c9fa9"/><path d="M3 14.6 l0.9 1.6 1.8 0.1 -1.3 1.2 0.4 1.8 -1.8 -0.9 -1.6 0.9 0.4 -1.8 -1.3 -1.2 1.8 -0.1Z" fill="#9c9fa9"/><path d="M8 14.6 l0.9 1.6 1.8 0.1 -1.3 1.2 0.4 1.8 -1.8 -0.9 -1.6 0.9 0.4 -1.8 -1.3 -1.2 1.8 -0.1Z" fill="#9c9fa9"/><path d="M13 14.6 l0.9 1.6 1.8 0.1 -1.3 1.2 0.4 1.8 -1.8 -0.9 -1.6 0.9 0.4 -1.8 -1.3 -1.2 1.8 -0.1Z" fill="#9c9fa9"/></svg>
<div class="t" style="top:929.63px;font-size:17.5px;line-height:17.5px;font-weight:400;color:#1b1d26;-webkit-text-stroke:0.2px currentColor;letter-spacing:0.15px;right:71px;margin-right:-0.15px;">2 weeks</div>
<svg class="r" style="left:1534.5px;top:927.65px;" width="18" height="18" viewBox="0 0 18 18"><path d="M14.2 14.2 A7.2 7.2 0 1 1 14.3 4.1" fill="none" stroke="#0b63ce" stroke-width="2.4" stroke-linecap="round"/><path d="M16.1 1.6 V6.6 H11" fill="none" stroke="#0b63ce" stroke-width="2.4" stroke-linejoin="round" stroke-linecap="round"/></svg>
<div class="r" style="left:277.5px;top:1014px;width:1298.5px;height:1px;background:#e3e4ea;"></div>
<div class="r" style="left:300px;top:979.2500000000001px;width:19.5px;height:19.5px;background:#fff;border:1.3px solid #c4c7cf;border-radius:4px;box-sizing:border-box;"></div>
<svg class="r" style="left:338.0px;top:979.2500000000001px;" width="19" height="19" viewBox="0 0 19 19"><circle cx="9.5" cy="9.5" r="8.3" fill="none" stroke="#90939d" stroke-width="2.1"/><path d="M9.5 5.2 V13.8 M5.2 9.5 H13.8" stroke="#90939d" stroke-width="2"/></svg>
<div class="t" style="top:981.64px;font-size:17.6px;line-height:17.6px;font-weight:400;color:#0b63ce;-webkit-text-stroke:0.2px currentColor;left:362.2px;">set sofas exterior<svg style="display:inline-block;vertical-align:-1.5px;margin-left:7px" width="15" height="14" viewBox="0 0 15 14"><g fill="none" stroke="#9c9fa9" stroke-width="1.9"><rect x="1" y="1" width="13" height="12"/><path d="M1 5.2 H14 M10.3 1 V5.2"/></g></svg></div>
<div class="r" style="left:582px;top:979.5000000000001px;width:18.5px;height:18.5px;background:#c6e4fd;border-radius:4px;"></div>
<div class="t" style="left:582px;width:18.5px;top:979.5000000000001px;height:18.5px;line-height:19.5px;text-align:center;font-size:14.3px;font-weight:700;color:#0d5fc4;">I</div>
<div class="r" style="left:605.2px;top:979.5000000000001px;width:18.5px;height:18.5px;background:#9ff0c8;border-radius:4px;"></div>
<div class="t" style="left:605.2px;width:18.5px;top:979.5000000000001px;height:18.5px;line-height:19.5px;text-align:center;font-size:14.3px;font-weight:700;color:#0a6a4c;">T</div>
<div class="t" style="top:981.73px;font-size:17.5px;line-height:17.5px;font-weight:400;color:#1b1d26;-webkit-text-stroke:0.2px currentColor;letter-spacing:0.3px;right:868.8px;margin-right:-0.3px;">3,600</div>
<div class="t" style="top:981.73px;font-size:17.5px;line-height:17.5px;font-weight:400;color:#1b1d26;-webkit-text-stroke:0.2px currentColor;right:727px;">6</div>
<div class="t" style="top:981.73px;font-size:17.5px;line-height:17.5px;font-weight:400;color:#1b1d26;-webkit-text-stroke:0.2px currentColor;right:656.2px;">74</div>
<div class="r" style="left:954px;top:981.7500000000001px;width:14px;height:14px;background:#f2443c;border-radius:50%;"></div>
<div class="t" style="top:981.73px;font-size:17.5px;line-height:17.5px;font-weight:400;color:#1b1d26;-webkit-text-stroke:0.2px currentColor;right:570.3px;">49</div>
<div class="r" style="left:1040.3px;top:981.7500000000001px;width:14px;height:14px;background:#fcc236;border-radius:50%;"></div>
<div class="t" style="top:981.73px;font-size:17.5px;line-height:17.5px;font-weight:400;color:#1b1d26;-webkit-text-stroke:0.2px currentColor;letter-spacing:0.2px;right:454px;margin-right:-0.2px;"><span style="letter-spacing:-1.2px">1</span>.<span style="letter-spacing:-1.2px">1</span>6</div>
<div class="t" style="top:981.73px;font-size:17.5px;line-height:17.5px;font-weight:400;color:#1b1d26;-webkit-text-stroke:0.2px currentColor;letter-spacing:0.2px;right:386.79999999999995px;margin-right:-0.2px;"><span style="letter-spacing:-1.2px">1</span>.00</div>
<svg class="r" style="left:1233px;top:980.7500000000001px;" width="18" height="16" viewBox="0 0 18 16"><g fill="none" stroke="#9c9fa9" stroke-width="2"><path d="M1 14.5 V2 H17 V6" /><path d="M1 14.5 H6.5"/><circle cx="11.5" cy="10.3" r="3.6"/><path d="M14 12.8 L16.8 15.4" stroke-linecap="round"/></g><rect x="0" y="0.5" width="18" height="2.8" fill="#9c9fa9"/></svg>
<div class="r" style="left:1261.3px;top:977.7500000000001px;width:1.3px;height:22.5px;background:#c9cbd2;"></div>
<svg class="r" style="left:1272.2px;top:983.5500000000001px;" width="19" height="12" viewBox="0 0 19 12"><g fill="none" stroke="#9c9fa9" stroke-width="2.1" stroke-linecap="round"><path d="M7 1.5 H5.5 A4.5 4.5 0 0 0 5.5 10.5 H7"/><path d="M12 1.5 H13.5 A4.5 4.5 0 0 1 13.5 10.5 H12"/><path d="M6 6 H13"/></g></svg>
<svg class="r" style="left:1302.2px;top:982.5500000000001px;" width="16" height="14" viewBox="0 0 16 14"><g fill="none" stroke="#9c9fa9" stroke-width="1.9"><rect x="1" y="1" width="14" height="12"/><path d="M1.5 11.5 L5 8 L7.5 10 L11.5 5.5 L14.5 8.5" stroke-linejoin="round"/></g><circle cx="4.6" cy="4.6" r="1.2" fill="#9c9fa9"/></svg>
<svg class="r" style="left:1330.1px;top:981.0500000000001px;" width="17" height="17" viewBox="0 0 17 17"><circle cx="8.5" cy="8.5" r="7.3" fill="none" stroke="#9c9fa9" stroke-width="2"/><path d="M6.6 5.2 L11.6 8.5 L6.6 11.8Z" fill="#9c9fa9"/></svg>
<svg class="r" style="left:1357.5px;top:981.0500000000001px;" width="19.5" height="17" viewBox="0 0 19.5 17"><rect x="0.3" y="0.3" width="8" height="2.3" rx="1.15" fill="#9c9fa9"/><rect x="0.3" y="5.0" width="8" height="2.3" rx="1.15" fill="#9c9fa9"/><rect x="0.3" y="9.7" width="8" height="2.3" rx="1.15" fill="#9c9fa9"/><rect x="0.3" y="14.4" width="8" height="2.3" rx="1.15" fill="#9c9fa9"/><rect x="10.9" y="0.3" width="8" height="2.3" rx="1.15" fill="#9c9fa9"/><rect x="10.9" y="5.0" width="8" height="2.3" rx="1.15" fill="#9c9fa9"/><rect x="10.9" y="9.7" width="8" height="2.3" rx="1.15" fill="#9c9fa9"/><rect x="10.9" y="14.4" width="8" height="2.3" rx="1.15" fill="#9c9fa9"/></svg>
<svg class="r" style="left:1387.5px;top:979.5500000000001px;" width="16" height="20" viewBox="0 0 16 20"><g fill="none" stroke="#9c9fa9" stroke-width="1.8" stroke-linejoin="round"><path d="M0.8 1.2 H3 L4.2 8.5 H13.5 L14.8 3.3 H3.6"/></g><circle cx="5" cy="11" r="1.1" fill="#9c9fa9"/><circle cx="12.5" cy="11" r="1.1" fill="#9c9fa9"/><path d="M3 14.6 l0.9 1.6 1.8 0.1 -1.3 1.2 0.4 1.8 -1.8 -0.9 -1.6 0.9 0.4 -1.8 -1.3 -1.2 1.8 -0.1Z" fill="#9c9fa9"/><path d="M8 14.6 l0.9 1.6 1.8 0.1 -1.3 1.2 0.4 1.8 -1.8 -0.9 -1.6 0.9 0.4 -1.8 -1.3 -1.2 1.8 -0.1Z" fill="#9c9fa9"/><path d="M13 14.6 l0.9 1.6 1.8 0.1 -1.3 1.2 0.4 1.8 -1.8 -0.9 -1.6 0.9 0.4 -1.8 -1.3 -1.2 1.8 -0.1Z" fill="#9c9fa9"/></svg>
<div class="t" style="top:981.73px;font-size:17.5px;line-height:17.5px;font-weight:400;color:#1b1d26;-webkit-text-stroke:0.2px currentColor;letter-spacing:0.15px;right:71px;margin-right:-0.15px;">3 weeks</div>
<svg class="r" style="left:1534.5px;top:979.7500000000001px;" width="18" height="18" viewBox="0 0 18 18"><path d="M14.2 14.2 A7.2 7.2 0 1 1 14.3 4.1" fill="none" stroke="#0b63ce" stroke-width="2.4" stroke-linecap="round"/><path d="M16.1 1.6 V6.6 H11" fill="none" stroke="#0b63ce" stroke-width="2.4" stroke-linejoin="round" stroke-linecap="round"/></svg>
<div class="r" style="left:277.5px;top:1066px;width:1298.5px;height:1px;background:#e3e4ea;"></div>
<div class="r" style="left:300px;top:1031.35px;width:19.5px;height:19.5px;background:#fff;border:1.3px solid #c4c7cf;border-radius:4px;box-sizing:border-box;"></div>
<svg class="r" style="left:338.0px;top:1031.35px;" width="19" height="19" viewBox="0 0 19 19"><circle cx="9.5" cy="9.5" r="8.3" fill="none" stroke="#90939d" stroke-width="2.1"/><path d="M9.5 5.2 V13.8 M5.2 9.5 H13.8" stroke="#90939d" stroke-width="2"/></svg>
<div class="t" style="top:1033.74px;font-size:17.6px;line-height:17.6px;font-weight:400;color:#0b63ce;-webkit-text-stroke:0.2px currentColor;left:362.2px;">sofa set leatherette<svg style="display:inline-block;vertical-align:-1.5px;margin-left:7px" width="15" height="14" viewBox="0 0 15 14"><g fill="none" stroke="#9c9fa9" stroke-width="1.9"><rect x="1" y="1" width="13" height="12"/><path d="M1 5.2 H14 M10.3 1 V5.2"/></g></svg></div>
<div class="r" style="left:582px;top:1031.6px;width:18.5px;height:18.5px;background:#c6e4fd;border-radius:4px;"></div>
<div class="t" style="left:582px;width:18.5px;top:1031.6px;height:18.5px;line-height:19.5px;text-align:center;font-size:14.3px;font-weight:700;color:#0d5fc4;">I</div>
<div class="r" style="left:605.2px;top:1031.6px;width:18.5px;height:18.5px;background:#9ff0c8;border-radius:4px;"></div>
<div class="t" style="left:605.2px;width:18.5px;top:1031.6px;height:18.5px;line-height:19.5px;text-align:center;font-size:14.3px;font-weight:700;color:#0a6a4c;">T</div>
<div class="t" style="top:1033.83px;font-size:17.5px;line-height:17.5px;font-weight:400;color:#1b1d26;-webkit-text-stroke:0.2px currentColor;letter-spacing:0.3px;right:868.8px;margin-right:-0.3px;">3,600</div>
<div class="t" style="top:1033.83px;font-size:17.5px;line-height:17.5px;font-weight:400;color:#1b1d26;-webkit-text-stroke:0.2px currentColor;right:727px;">7</div>
<div class="t" style="top:1033.83px;font-size:17.5px;line-height:17.5px;font-weight:400;color:#8c8f99;-webkit-text-stroke:0.2px currentColor;right:656.2px;">n/a</div>
<div class="r" style="left:954px;top:1033.85px;width:14px;height:14px;background:#e4e5ea;border-radius:50%;"></div>
<div class="t" style="top:1033.83px;font-size:17.5px;line-height:17.5px;font-weight:400;color:#1b1d26;-webkit-text-stroke:0.2px currentColor;right:570.3px;"><span style="letter-spacing:-1.2px">1</span>0</div>
<div class="r" style="left:1040.3px;top:1033.85px;width:14px;height:14px;background:#4fd09c;border-radius:50%;"></div>
<div class="t" style="top:1033.83px;font-size:17.5px;line-height:17.5px;font-weight:400;color:#1b1d26;-webkit-text-stroke:0.2px currentColor;letter-spacing:0.2px;right:454px;margin-right:-0.2px;"><span style="letter-spacing:-1.2px">1</span>.00</div>
<div class="t" style="top:1033.83px;font-size:17.5px;line-height:17.5px;font-weight:400;color:#1b1d26;-webkit-text-stroke:0.2px currentColor;letter-spacing:0.2px;right:386.79999999999995px;margin-right:-0.2px;"><span style="letter-spacing:-1.2px">1</span>.00</div>
<svg class="r" style="left:1233px;top:1032.85px;" width="18" height="16" viewBox="0 0 18 16"><g fill="none" stroke="#9c9fa9" stroke-width="2"><path d="M1 14.5 V2 H17 V6" /><path d="M1 14.5 H6.5"/><circle cx="11.5" cy="10.3" r="3.6"/><path d="M14 12.8 L16.8 15.4" stroke-linecap="round"/></g><rect x="0" y="0.5" width="18" height="2.8" fill="#9c9fa9"/></svg>
<div class="r" style="left:1261.3px;top:1029.85px;width:1.3px;height:22.5px;background:#c9cbd2;"></div>
<svg class="r" style="left:1272.2px;top:1035.6499999999999px;" width="19" height="12" viewBox="0 0 19 12"><g fill="none" stroke="#9c9fa9" stroke-width="2.1" stroke-linecap="round"><path d="M7 1.5 H5.5 A4.5 4.5 0 0 0 5.5 10.5 H7"/><path d="M12 1.5 H13.5 A4.5 4.5 0 0 1 13.5 10.5 H12"/><path d="M6 6 H13"/></g></svg>
<svg class="r" style="left:1302.2px;top:1034.6499999999999px;" width="16" height="14" viewBox="0 0 16 14"><g fill="none" stroke="#9c9fa9" stroke-width="1.9"><rect x="1" y="1" width="14" height="12"/><path d="M1.5 11.5 L5 8 L7.5 10 L11.5 5.5 L14.5 8.5" stroke-linejoin="round"/></g><circle cx="4.6" cy="4.6" r="1.2" fill="#9c9fa9"/></svg>
<svg class="r" style="left:1329.3999999999999px;top:1033.6499999999999px;" width="19" height="19" viewBox="0 0 19 19"><g fill="none" stroke="#9c9fa9" stroke-width="1.9"><rect x="1" y="1" width="13.5" height="12.5"/><path d="M1.5 11.5 L5 8 L7.5 10 L11 6 L14 9" stroke-linejoin="round"/><path d="M3.5 16.5 H17 V4"/></g><circle cx="4.5" cy="4.5" r="1.1" fill="#9c9fa9"/></svg>
<svg class="r" style="left:1358.5px;top:1033.1499999999999px;" width="17" height="17" viewBox="0 0 17 17"><circle cx="8.5" cy="8.5" r="7.3" fill="none" stroke="#9c9fa9" stroke-width="2"/><path d="M6.6 5.2 L11.6 8.5 L6.6 11.8Z" fill="#9c9fa9"/></svg>
<div class="t" style="top:1033.05px;font-size:17.0px;line-height:17.0px;font-weight:400;color:#3d4049;-webkit-text-stroke:0.2px currentColor;left:1386.6px;">+2</div>
<div class="r" style="left:1386.1px;top:1053.6499999999999px;width:21px;height:1.5px;background:repeating-linear-gradient(90deg,#858892 0 2.6px,transparent 2.6px 6px);"></div>
<div class="t" style="top:1033.83px;font-size:17.5px;line-height:17.5px;font-weight:400;color:#1b1d26;-webkit-text-stroke:0.2px currentColor;letter-spacing:0.15px;right:71px;margin-right:-0.15px;">3 weeks</div>
<svg class="r" style="left:1534.5px;top:1031.85px;" width="18" height="18" viewBox="0 0 18 18"><path d="M14.2 14.2 A7.2 7.2 0 1 1 14.3 4.1" fill="none" stroke="#0b63ce" stroke-width="2.4" stroke-linecap="round"/><path d="M16.1 1.6 V6.6 H11" fill="none" stroke="#0b63ce" stroke-width="2.4" stroke-linejoin="round" stroke-linecap="round"/></svg>
<div class="r" style="left:560.2px;top:315px;width:509px;height:7px;background:#b67cf7;"></div>
<div class="r" style="left:560.2px;top:315px;width:7.1px;height:760px;background:#b67cf7;"></div>
<div class="r" style="left:631.2px;top:315px;width:7.1px;height:760px;background:#b67cf7;"></div>
<div class="r" style="left:738px;top:315px;width:7.1px;height:760px;background:#b67cf7;"></div>
<div class="r" style="left:882.3px;top:315px;width:7.1px;height:760px;background:#b67cf7;"></div>
<div class="r" style="left:980px;top:315px;width:7.1px;height:760px;background:#b67cf7;"></div>
<div class="r" style="left:1062.1px;top:315px;width:7.1px;height:760px;background:#b67cf7;"></div>
<div class="r" style="left:0px;top:1014.5px;width:1600px;height:44.5px;background:linear-gradient(to bottom, rgba(250,250,250,0.1) 0px, rgba(250,250,250,0.32) 12px, rgba(251,251,251,0.6) 25px, rgba(253,253,253,0.88) 33px, #fff 38px, #fff 44.5px);"></div>
</body></html>
